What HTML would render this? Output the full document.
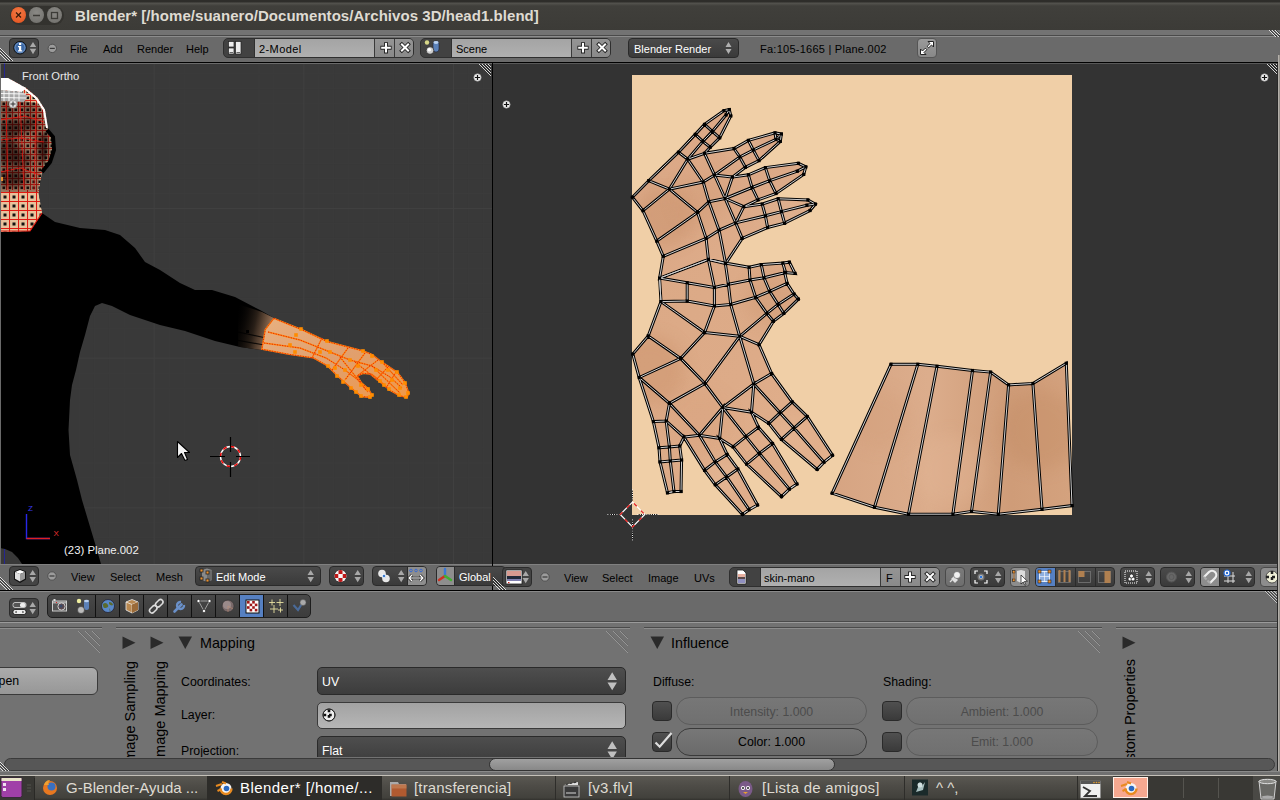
<!DOCTYPE html>
<html><head><meta charset="utf-8">
<style>
*{box-sizing:border-box;margin:0;padding:0}
html,body{width:1280px;height:800px;overflow:hidden;background:#727272;font-family:"Liberation Sans",sans-serif}
.a{position:absolute}
.t{position:absolute;white-space:nowrap;font-size:11px;line-height:12px;color:#000}
.w{color:#fff}
.btn-d{position:absolute;background:linear-gradient(#4a4a4a,#3a3a3a);border:1px solid #2a2a2a;border-radius:4px}
.btn-l{position:absolute;background:linear-gradient(#9a9a9a,#8a8a8a);border:1px solid #444;border-radius:4px}
.fld{position:absolute;background:linear-gradient(#a0a0a0,#b4b4b4);border:1px solid #2f2f2f}
</style></head><body>
<!-- title bar -->
<div class="a" style="left:0;top:0;width:1280px;height:30px;background:linear-gradient(#2e2d2a 0px,#2e2d2a 2px,#55544f 3px,#403f3b 6px,#3c3b37 30px)"></div>
<div class="a" style="left:10px;top:6px;width:54px;height:19px;border-radius:10px;background:#33322e"></div>
<div class="a" style="left:11px;top:7px;width:15px;height:16px;border-radius:50%;background:radial-gradient(circle at 50% 35%,#f47a45,#e2501c)"></div>
<div class="a" style="left:29px;top:7px;width:15px;height:16px;border-radius:50%;background:radial-gradient(circle at 50% 35%,#8a8985,#6f6e6a)"></div>
<div class="a" style="left:47px;top:7px;width:15px;height:16px;border-radius:50%;background:radial-gradient(circle at 50% 35%,#8a8985,#6f6e6a)"></div>
<svg class="a" style="left:0;top:0" width="70" height="30"><path d="M16 12.5l5 5M21 12.5l-5 5" stroke="#3a1a0a" stroke-width="1.3"/><path d="M33 15.5h7" stroke="#3c3b37" stroke-width="1.5"/><rect x="51.5" y="12.5" width="6" height="6" fill="none" stroke="#3c3b37" stroke-width="1.3"/></svg>
<div class="t" style="left:75px;top:7px;font-size:15px;line-height:18px;font-weight:bold;color:#dfdbd2;letter-spacing:0.05px">Blender* [/home/suanero/Documentos/Archivos 3D/head1.blend]</div>

<!-- strip below title -->
<div class="a" style="left:0;top:30px;width:1280px;height:6px;background:#737373;border-bottom:1px solid #4a4a4a"></div>
<!-- info header -->
<div class="a" style="left:0;top:36px;width:1280px;height:27px;background:#6a6a6a;border-top:1px solid #8c8c8c;border-bottom:1px solid #000"></div>


<!-- info header content -->
<div class="btn-d" style="left:9px;top:38px;width:30px;height:20px;background:#444;border-color:#2b2b2b"></div>
<svg class="a" style="left:0;top:36px" width="70" height="26">
<circle cx="20" cy="11.7" r="6.3" fill="#3d69a6" stroke="#111" stroke-width="1"/>
<circle cx="20" cy="11.7" r="5" fill="none" stroke="#8fb0d8" stroke-width="0.8" opacity="0.7"/>
<rect x="19" y="7" width="2.2" height="2" fill="#fff"/><path d="M18 10h3.2v4.3h1v1.2h-4.2v-1.2h1v-3.1h-1z" fill="#fff"/>
<path d="M29.8 11h6.4l-3.2-5z M29.8 12.8h6.4l-3.2 5.4z" fill="#a8a8a8"/>
<circle cx="52.3" cy="12.4" r="4.2" fill="#9c9c9c" stroke="#505050" stroke-width="1"/><path d="M49.8 12.4h5" stroke="#3a3a3a" stroke-width="1.2"/>
<path d="M0 12l13 13M0 15l10 10M0 18l7 7" stroke="#fff" stroke-width="0.8"/><path d="M0 13.2l11.8 11.8M0 16.2l8.8 8.8" stroke="#222" stroke-width="0.8"/>
</svg>
<div class="t" style="left:70px;top:43px">File</div>
<div class="t" style="left:103px;top:43px">Add</div>
<div class="t" style="left:137px;top:43px">Render</div>
<div class="t" style="left:186px;top:43px">Help</div>

<!-- screen layout -->
<div class="a" style="left:223px;top:38px;width:191px;height:20px;border:1px solid #2f2f2f;border-radius:5px;overflow:hidden;background:#424242">
 <div class="a" style="left:30px;top:0;width:121px;height:18px;background:linear-gradient(#a4a4a4,#b0b0b0);border-left:1px solid #2f2f2f"></div>
 <div class="a" style="left:150px;top:0;width:20px;height:18px;background:linear-gradient(#949494,#8a8a8a);border-left:1px solid #3a3a3a"></div>
 <div class="a" style="left:170px;top:0;width:20px;height:18px;background:linear-gradient(#949494,#8a8a8a);border-left:1px solid #3a3a3a"></div>
</div>
<svg class="a" style="left:223px;top:38px" width="191" height="20">
<rect x="5.5" y="3.5" width="5.5" height="5.5" fill="#ececec" stroke="#222" stroke-width="0.7"/><rect x="5.5" y="10" width="5.5" height="6" fill="#ececec" stroke="#222" stroke-width="0.7"/><rect x="12.5" y="3.5" width="5.5" height="12.5" fill="#ececec" stroke="#222" stroke-width="0.7"/>
<path d="M6.5 14.5h3.5M13.5 14.5h3.5" stroke="#444" stroke-width="0.8"/>
<path d="M163 4.2v11.2M157.4 9.8h11.2" stroke="#222" stroke-width="4"/><path d="M163 5v9.6M158.2 9.8h9.6" stroke="#fff" stroke-width="2.1"/>
<path d="M177.5 5l9 9M186.5 5l-9 9" stroke="#222" stroke-width="3.8"/><path d="M178.2 5.7l7.6 7.6M185.8 5.7l-7.6 7.6" stroke="#fff" stroke-width="2"/>
</svg>
<div class="t" style="left:259px;top:43px;letter-spacing:0.4px">2-Model</div>

<!-- scene -->
<div class="a" style="left:420px;top:38px;width:191px;height:20px;border:1px solid #2f2f2f;border-radius:5px;overflow:hidden;background:#424242">
 <div class="a" style="left:30px;top:0;width:121px;height:18px;background:linear-gradient(#a4a4a4,#b0b0b0);border-left:1px solid #2f2f2f"></div>
 <div class="a" style="left:150px;top:0;width:20px;height:18px;background:linear-gradient(#949494,#8a8a8a);border-left:1px solid #3a3a3a"></div>
 <div class="a" style="left:170px;top:0;width:20px;height:18px;background:linear-gradient(#949494,#8a8a8a);border-left:1px solid #3a3a3a"></div>
</div>
<svg class="a" style="left:420px;top:38px" width="191" height="20">
<circle cx="7" cy="4.5" r="2.2" fill="#e8e890" opacity="0.9"/><rect x="13" y="3" width="6" height="11" rx="3" fill="#5a80b8" stroke="#223" stroke-width="0.6"/><ellipse cx="16" cy="4.5" rx="2.6" ry="1.4" fill="#b8d0f0"/>
<circle cx="10" cy="12.5" r="3.8" fill="#cfcfcf" stroke="#222" stroke-width="0.7"/><circle cx="9.3" cy="11.8" r="1.8" fill="#fff"/>
<path d="M163 4.2v11.2M157.4 9.8h11.2" stroke="#222" stroke-width="4"/><path d="M163 5v9.6M158.2 9.8h9.6" stroke="#fff" stroke-width="2.1"/>
<path d="M177.5 5l9 9M186.5 5l-9 9" stroke="#222" stroke-width="3.8"/><path d="M178.2 5.7l7.6 7.6M185.8 5.7l-7.6 7.6" stroke="#fff" stroke-width="2"/>
</svg>
<div class="t" style="left:456px;top:43px">Scene</div>

<!-- render engine -->
<div class="btn-d" style="left:628px;top:38px;width:111px;height:20px"></div>
<div class="t w" style="left:634px;top:43px">Blender Render</div>
<svg class="a" style="left:724px;top:38px" width="12" height="20"><path d="M1.5 9h6l-3-5z M1.5 11h6l-3 5z" fill="#b0b0b0"/></svg>

<div class="t" style="left:760px;top:43px;letter-spacing:0.25px">Fa:105-1665 | Plane.002</div>

<!-- fullscreen btn -->
<div class="btn-l" style="left:917px;top:38px;width:20px;height:20px;border-color:#555;background:linear-gradient(#9a9a9a,#888)"></div>
<svg class="a" style="left:917px;top:38px" width="20" height="20"><g stroke="#222" stroke-width="1" fill="#fff"><path d="M11 3.5h5.5V9l-2-2-2.8 2.8-1.5-1.5L13 5.5z"/><path d="M9 16.5H3.5V11l2 2 2.8-2.8 1.5 1.5L7 14.5z"/></g></svg>
<svg class="a" style="left:1260px;top:30px" width="20" height="8"><path d="M9 0l7 7M12 0l7 7M15 0l5 5" stroke="#fff" stroke-width="0.8"/><path d="M10 0l7 7M13 0l7 7M16 0l4 4" stroke="#222" stroke-width="0.7"/></svg>

<!-- 3D view -->
<div class="a" style="left:0;top:63px;width:492px;height:501px;background:#393939;overflow:hidden" id="v3d"><svg class="a" style="left:0;top:0" width="492" height="501"><path d="M4.50 0V501 M19.47 0V501 M34.43 0V501 M49.40 0V501 M64.37 0V501 M79.34 0V501 M94.30 0V501 M109.27 0V501 M124.24 0V501 M139.20 0V501 M169.14 0V501 M184.10 0V501 M199.07 0V501 M214.04 0V501 M229.00 0V501 M243.97 0V501 M258.94 0V501 M273.91 0V501 M288.87 0V501 M318.81 0V501 M333.77 0V501 M348.74 0V501 M363.71 0V501 M378.68 0V501 M393.64 0V501 M408.61 0V501 M423.58 0V501 M438.54 0V501 M468.48 0V501 M483.44 0V501 M0 10.80H492 M0 25.76H492 M0 40.73H492 M0 55.70H492 M0 70.66H492 M0 85.63H492 M0 100.60H492 M0 115.57H492 M0 130.53H492 M0 160.47H492 M0 175.43H492 M0 190.40H492 M0 205.37H492 M0 220.34H492 M0 235.30H492 M0 250.27H492 M0 265.24H492 M0 280.20H492 M0 310.14H492 M0 325.10H492 M0 340.07H492 M0 355.04H492 M0 370.00H492 M0 384.97H492 M0 399.94H492 M0 414.91H492 M0 429.87H492 M0 459.81H492 M0 474.77H492 M0 489.74H492" stroke="#3b3b3b" stroke-width="1"/>
<path d="M154.17 0V501 M303.84 0V501 M453.51 0V501 M0 145.50H492 M0 295.17H492 M0 444.84H492" stroke="#404040" stroke-width="1"/>
<path d="M4.5 0V501" stroke="#262690" stroke-width="1"/>
<polygon points="0.0,167.0 30.0,168.0 42.0,150.0 55.0,159.0 80.0,165.0 105.0,167.0 120.0,172.0 135.0,185.0 145.0,199.0 160.0,207.0 180.0,220.0 195.0,227.0 212.0,227.0 235.0,234.0 260.0,247.0 274.0,255.0 262.0,287.0 240.0,284.0 215.0,278.0 185.0,268.0 160.0,262.0 130.0,252.0 112.0,243.0 102.0,240.0 95.0,243.0 90.0,253.0 85.0,272.0 80.0,289.0 76.0,307.0 72.0,322.0 70.0,337.0 68.5,367.0 70.0,392.0 77.0,417.0 82.0,437.0 88.0,457.0 94.0,477.0 101.0,501.0 22.0,501.0 18.0,495.0 12.0,489.0 5.0,486.0 0.0,485.0" fill="#000"/>
<defs><radialGradient id="wr" cx="0.85" cy="0.55" r="0.6"><stop offset="0" stop-color="#7a5a40"/><stop offset="0.5" stop-color="#3a2a20"/><stop offset="1" stop-color="#000" stop-opacity="0"/></radialGradient><linearGradient id="hand" x1="0" y1="0" x2="1" y2="1"><stop offset="0" stop-color="#e8a870"/><stop offset="1" stop-color="#f09850"/></linearGradient><pattern id="hm" width="7" height="7" patternUnits="userSpaceOnUse"><rect width="7" height="7" fill="#e8c29c"/><path d="M0 0.5H7M0.5 0V7" stroke="#e02010" stroke-width="1"/><rect x="2.5" y="2.5" width="2.5" height="2.5" fill="#111"/></pattern></defs>
<defs><linearGradient id="wr2" x1="0" y1="0" x2="1" y2="0.3"><stop offset="0" stop-color="#000" stop-opacity="0"/><stop offset="0.55" stop-color="#2a2018"/><stop offset="1" stop-color="#9a7458"/></linearGradient></defs>
<polygon points="238.0,241.0 262.0,249.0 274.0,255.0 262.0,287.0 240.0,284.0 238.0,283.0" fill="url(#wr2)"/>
<path d="M238.0,269.0 266.0,275.0M236.0,277.0 264.0,282.0" stroke="#000" stroke-width="1.2" opacity="0.8"/>
<rect x="246" y="267" width="3" height="3" fill="#000"/>
<defs><pattern id="hm2" x="0" y="1" width="6" height="6" patternUnits="userSpaceOnUse"><rect width="6" height="6" fill="#e6bf98"/><path d="M0 0.5H6M0.5 0V6" stroke="#d81810" stroke-width="0.9"/><rect x="2.5" y="2.5" width="2.6" height="2.6" fill="#111"/></pattern><pattern id="hm4" x="0" y="3" width="9" height="9" patternUnits="userSpaceOnUse"><rect width="9" height="9" fill="#e8c29c"/><path d="M0 0.5H9M0.5 0V9" stroke="#e01810" stroke-width="1.1"/><rect x="3.5" y="3.5" width="3" height="3" fill="#111"/></pattern><filter id="hb" x="-50%" y="-50%" width="200%" height="200%"><feGaussianBlur stdDeviation="3"/></filter></defs>
<polygon points="0.0,15.0 8.0,15.0 26.0,25.0 38.0,35.0 45.0,47.0 48.0,67.0 53.0,74.0 54.0,87.0 50.0,99.0 42.0,109.0 38.0,132.0 42.0,150.0 30.0,168.0 0.0,169.0" fill="url(#hm2)"/>
<polygon points="0.0,127.0 38.0,127.0 42.0,150.0 30.0,168.0 0.0,169.0" fill="url(#hm4)"/>
<g filter="url(#hb)"><ellipse cx="12" cy="65" rx="14" ry="9" fill="#000" opacity="0.6"/><ellipse cx="30" cy="61" rx="8" ry="7" fill="#000" opacity="0.5"/><ellipse cx="8" cy="89" rx="12" ry="14" fill="#000" opacity="0.6"/><ellipse cx="22" cy="97" rx="9" ry="9" fill="#000" opacity="0.5"/><ellipse cx="12" cy="115" rx="14" ry="9" fill="#000" opacity="0.6"/><ellipse cx="44" cy="85" rx="6" ry="16" fill="#000" opacity="0.7"/><ellipse cx="28" cy="47" rx="8" ry="5" fill="#000" opacity="0.3"/><ellipse cx="8" cy="47" rx="8" ry="6" fill="#000" opacity="0.4"/></g>
<polygon points="0.0,38.0 24.0,38.0 40.0,41.0 46.0,55.0 48.0,69.0 46.0,97.0 40.0,112.0 38.0,129.0 0.0,129.0" fill="#200000" opacity="0.38"/>
<path d="M0.0,77.0 20.0,75.0 44.0,79.0M0.0,57.0 25.0,53.0 44.0,59.0M0.0,109.0 20.0,105.0 40.0,112.0M6.0,41.0 8.0,127.0M20.0,37.0 24.0,127.0M36.0,41.0 34.0,127.0" stroke="#e81810" stroke-width="1" fill="none" opacity="0.8"/>
<polygon points="0.0,15.0 8.0,15.0 26.0,25.0 22.0,29.0 0.0,27.0" fill="#fff"/>
<polygon points="0.0,27.0 22.0,29.0 28.0,33.0 24.0,39.0 0.0,38.0" fill="#a8a8a8"/>
<path d="M0.0,30.5 26.0,31.0M0.0,34.5 26.0,35.0M4.0,27.0 4.0,38.0M9.0,27.0 9.0,38.0M14.0,28.0 14.0,38.0M19.0,28.0 19.0,38.0" stroke="#fff" stroke-width="0.9"/>
<path d="M24.0,25.0 36.0,35.0 44.0,47.0 47.0,65.0" stroke="#fff" stroke-width="2" fill="none"/>
<path d="M47.0,67.0 53.0,74.0 54.0,87.0 50.0,99.0 42.0,109.0" stroke="#000" stroke-width="4" fill="none"/>
<path d="M0.0,168.0 30.0,168.0 42.0,150.0" stroke="#e01810" stroke-width="1.2" fill="none"/>
<g transform="translate(13,41)"><circle r="4" fill="#ddd" stroke="#888" stroke-width="0.5"/><path d="M-2.5 0h5M0 -2.5v5" stroke="#333" stroke-width="1"/></g>
<rect x="0" y="114" width="3" height="4" fill="#e89030"/>
<defs><linearGradient id="hand2" x1="0" y1="0" x2="1" y2="1"><stop offset="0" stop-color="#e8b080"/><stop offset="0.5" stop-color="#e0a070"/><stop offset="1" stop-color="#f09848"/></linearGradient></defs>
<polygon points="273.9,255.4 301.4,266.5 327.1,278.5 363.2,288.0 371.8,291.4 382.1,299.2 397.6,309.5 405.3,319.8 408.8,330.1 407.0,334.4 399.3,332.7 389.0,326.7 380.4,318.0 371.8,311.2 363.2,310.3 357.2,312.9 361.5,319.8 368.4,325.8 371.8,331.8 370.1,334.4 361.5,333.5 351.2,325.0 337.5,312.9 327.1,302.6 313.4,294.9 289.3,291.4 261.9,286.3 265.3,266.5" fill="url(#hand2)"/>
<path d="M273.9,255.4 L301.4,266.5 L327.1,278.5 L363.2,288.0 L371.8,291.4 L382.1,299.2 L397.6,309.5 L405.3,319.8 L408.8,330.1 L407.0,334.4 L399.3,332.7 L389.0,326.7 L380.4,318.0 L371.8,311.2 L363.2,310.3 L357.2,312.9 L361.5,319.8 L368.4,325.8 L371.8,331.8 L370.1,334.4 L361.5,333.5 L351.2,325.0 L337.5,312.9 L327.1,302.6 L313.4,294.9 L289.3,291.4 L261.9,286.3 L265.3,266.5 L273.9,255.4 M268.0,269.0 L300.0,277.0 L330.0,289.0 L350.0,297.0 L372.0,303.0 L390.0,314.0 L402.0,325.0 M264.0,280.0 L300.0,285.0 L326.0,295.0 L345.0,307.0 L358.0,317.0 L366.0,327.0 M322.0,275.0 L312.0,295.0 M348.0,285.0 L332.0,307.0 M365.0,290.0 L345.0,317.0 M378.0,297.0 L357.0,313.0 M388.0,304.0 L376.0,317.0 M396.0,309.0 L386.0,325.0 M355.0,299.0 L390.0,327.0 M340.0,294.0 L368.0,329.0 M372.0,303.0 L400.0,330.0 M382.0,299.0 L403.0,322.0" fill="none" stroke="#ff8a10" stroke-width="1.4"/>
<path d="M273.9,255.4 L301.4,266.5 L327.1,278.5 L363.2,288.0 L371.8,291.4 L382.1,299.2 L397.6,309.5 L405.3,319.8 L408.8,330.1 L407.0,334.4 L399.3,332.7 L389.0,326.7 L380.4,318.0 L371.8,311.2 L363.2,310.3 L357.2,312.9 L361.5,319.8 L368.4,325.8 L371.8,331.8 L370.1,334.4 L361.5,333.5 L351.2,325.0 L337.5,312.9 L327.1,302.6 L313.4,294.9 L289.3,291.4 L261.9,286.3 L265.3,266.5 L273.9,255.4 M268.0,269.0 L300.0,277.0 L330.0,289.0 L350.0,297.0 L372.0,303.0 L390.0,314.0 L402.0,325.0 M264.0,280.0 L300.0,285.0 L326.0,295.0 L345.0,307.0 L358.0,317.0 L366.0,327.0 M322.0,275.0 L312.0,295.0 M348.0,285.0 L332.0,307.0 M365.0,290.0 L345.0,317.0 M378.0,297.0 L357.0,313.0 M388.0,304.0 L376.0,317.0 M396.0,309.0 L386.0,325.0 M355.0,299.0 L390.0,327.0 M340.0,294.0 L368.0,329.0 M372.0,303.0 L400.0,330.0 M382.0,299.0 L403.0,322.0" fill="none" stroke="#e81800" stroke-width="0.9" stroke-dasharray="1.3 1.3"/>
<g fill="#ff8c00"><rect x="299.2" y="264.2" width="3.6" height="3.6"/><rect x="294.2" y="270.2" width="3.6" height="3.6"/><rect x="288.2" y="280.2" width="3.6" height="3.6"/><rect x="293.2" y="287.2" width="3.6" height="3.6"/><rect x="325.2" y="276.2" width="3.6" height="3.6"/><rect x="318.2" y="287.2" width="3.6" height="3.6"/><rect x="328.2" y="287.2" width="3.6" height="3.6"/><rect x="333.2" y="303.2" width="3.6" height="3.6"/><rect x="348.2" y="295.2" width="3.6" height="3.6"/><rect x="343.2" y="305.2" width="3.6" height="3.6"/><rect x="356.2" y="301.2" width="3.6" height="3.6"/><rect x="361.2" y="286.2" width="3.6" height="3.6"/><rect x="370.2" y="291.2" width="3.6" height="3.6"/><rect x="380.2" y="297.2" width="3.6" height="3.6"/><rect x="374.2" y="305.2" width="3.6" height="3.6"/><rect x="386.2" y="305.2" width="3.6" height="3.6"/><rect x="395.2" y="307.2" width="3.6" height="3.6"/><rect x="390.2" y="315.2" width="3.6" height="3.6"/><rect x="403.2" y="318.2" width="3.6" height="3.6"/><rect x="398.2" y="323.2" width="3.6" height="3.6"/><rect x="406.2" y="328.2" width="3.6" height="3.6"/><rect x="404.2" y="332.2" width="3.6" height="3.6"/><rect x="397.2" y="330.2" width="3.6" height="3.6"/><rect x="387.2" y="324.2" width="3.6" height="3.6"/><rect x="378.2" y="316.2" width="3.6" height="3.6"/><rect x="382.2" y="320.2" width="3.6" height="3.6"/><rect x="359.2" y="320.2" width="3.6" height="3.6"/><rect x="366.2" y="324.2" width="3.6" height="3.6"/><rect x="370.2" y="330.2" width="3.6" height="3.6"/><rect x="368.2" y="332.2" width="3.6" height="3.6"/><rect x="359.2" y="331.2" width="3.6" height="3.6"/><rect x="349.2" y="323.2" width="3.6" height="3.6"/><rect x="354.2" y="327.2" width="3.6" height="3.6"/><rect x="335.2" y="311.2" width="3.6" height="3.6"/><rect x="341.2" y="317.2" width="3.6" height="3.6"/><rect x="326.2" y="301.2" width="3.6" height="3.6"/></g>
<circle cx="230.5" cy="393.5" r="10" fill="none" stroke="#fff" stroke-width="1.4"/>
<circle cx="230.5" cy="393.5" r="10" fill="none" stroke="#e00" stroke-width="1.4" stroke-dasharray="3.9 3.9"/>
<path d="M210 393.5H225M236 393.5H250M230.5 374V389M230.5 399V414" stroke="#000" stroke-width="1.2"/>
<path d="M177.5 378.5V394.5L181.5 390.5L185 397.5L187.5 396.5L184.5 389.5H189.5Z" fill="#f4f4f4" stroke="#000" stroke-width="1.1" stroke-linejoin="round"/>
<path d="M26.5 451V475.5H50" stroke="#2828e8" stroke-width="1.4" fill="none"/><path d="M26.5 475.5H50" stroke="#e02020" stroke-width="1.4"/>
<text x="28" y="447.5" font-family="Liberation Sans" font-size="8" fill="#3a3af0">Z</text><text x="53.5" y="473" font-family="Liberation Sans" font-size="8" fill="#e83030">X</text></svg>
<div class="t" style="left:22px;top:7px;color:#e8e8e8;font-size:11.2px">Front Ortho</div>
<div class="t" style="left:64px;top:481px;color:#f0f0f0;font-size:11.4px">(23) Plane.002</div>
<svg class="a" style="left:472px;top:9px" width="10" height="10"><circle cx="5.5" cy="5.5" r="3.7" fill="#ececec" stroke="#999" stroke-width="0.6"/><path d="M5.5 2.9v5.2M2.9 5.5h5.2" stroke="#111" stroke-width="1.2"/></svg>
<svg class="a" style="left:478px;top:0" width="14" height="14"><path d="M0 0l13 13M3 0l10 10M6 0l7 7M9 0l4 4" stroke="#fff" stroke-width="0.8"/><path d="M1 0l12 12M4 0l9 9M7 0l6 6" stroke="#222" stroke-width="0.7"/></svg>
</div>
<div class="a" style="left:0;top:63px;width:492px;height:1px;background:#6a6a6a"></div><div class="a" style="left:0;top:63px;width:1px;height:501px;background:#6a6a6a"></div><div class="a" style="left:4px;top:63px;width:1px;height:1px;background:#5050a8"></div>
<!-- separator -->
<div class="a" style="left:492px;top:62px;width:1px;height:529px;background:#000"></div>
<!-- UV editor -->
<div class="a" style="left:493px;top:63px;width:787px;height:501px;background:#333333;overflow:hidden" id="vuv">
<svg class="a" style="left:0;top:0" width="787" height="501">
<defs>
<linearGradient id="skin1" x1="0" y1="0" x2="1" y2="1"><stop offset="0" stop-color="#dcaa88"/><stop offset="0.5" stop-color="#dba886"/><stop offset="1" stop-color="#e2b390"/></linearGradient>
<linearGradient id="skin2" x1="0" y1="0" x2="1" y2="1"><stop offset="0" stop-color="#dba986"/><stop offset="0.5" stop-color="#ddab88"/><stop offset="1" stop-color="#e4b28e"/></linearGradient>
<linearGradient id="skin3" x1="0" y1="0" x2="1" y2="0"><stop offset="0" stop-color="#d6a482"/><stop offset="0.4" stop-color="#dcad8c"/><stop offset="0.75" stop-color="#cf9c78"/><stop offset="1" stop-color="#d4a27e"/></linearGradient>
</defs>
<rect x="139" y="12" width="440" height="440" fill="#f0cfa7"/>
<clipPath id="cpu"><polygon points="139.4,134.2 155.7,117.7 185.5,89.2 202.3,71.4 211.5,61.4 231.0,47.6 236.3,46.6 237.8,52.9 226.7,74.8 217.2,84.2 211.5,90.3 241.0,85.5 255.4,77.4 282.0,69.9 288.4,71.0 287.3,78.4 266.0,97.6 252.4,104.3 239.4,114.1 255.4,111.8 272.4,104.6 305.4,100.3 312.8,103.9 310.7,111.4 283.0,130.5 265.0,136.9 250.8,143.7 269.2,141.1 285.2,135.8 314.9,136.9 322.4,141.1 317.0,147.5 291.6,160.2 274.6,164.5 249.2,175.4 232.6,200.6 215.4,196.5 166.6,215.1 170.3,193.3 163.8,178.1 150.0,147.7"/><polygon points="166.6,215.1 215.4,196.4 232.3,200.1 256.1,204.3 268.3,201.6 289.8,200.1 296.4,199.2 302.0,210.4 291.7,209.5 294.1,220.4 301.0,231.0 305.4,236.1 290.8,250.4 280.4,258.3 266.0,281.7 278.6,310.5 299.2,338.9 314.2,353.5 339.5,392.3 331.0,399.2 324.1,406.4 288.5,376.4 275.8,360.4 258.5,349.2 265.4,364.2 279.5,380.5 303.9,421.0 296.4,426.1 288.5,433.6 253.6,401.1 240.1,383.9 226.6,375.4 234.1,391.4 244.8,406.0 264.5,442.0 256.1,446.7 249.5,451.4 222.3,421.8 211.6,407.3 191.0,374.1 186.7,383.0 188.6,397.0 188.0,428.5 181.0,428.5 174.5,429.8 167.0,398.9 166.0,384.8 160.4,358.6 146.2,314.5 139.8,291.1 155.2,272.9 168.0,238.6"/><polygon points="398.0,301.3 424.8,301.3 444.0,303.3 479.5,307.5 497.6,309.1 515.6,321.9 539.9,320.5 573.3,300.3 579.0,442.6 549.0,446.3 505.3,451.2 478.5,448.4 459.9,451.2 415.5,451.2 381.5,444.2 339.2,430.2"/></clipPath>
<polygon points="139.4,134.2 155.7,117.7 185.5,89.2 202.3,71.4 211.5,61.4 231.0,47.6 236.3,46.6 237.8,52.9 226.7,74.8 217.2,84.2 211.5,90.3 241.0,85.5 255.4,77.4 282.0,69.9 288.4,71.0 287.3,78.4 266.0,97.6 252.4,104.3 239.4,114.1 255.4,111.8 272.4,104.6 305.4,100.3 312.8,103.9 310.7,111.4 283.0,130.5 265.0,136.9 250.8,143.7 269.2,141.1 285.2,135.8 314.9,136.9 322.4,141.1 317.0,147.5 291.6,160.2 274.6,164.5 249.2,175.4 232.6,200.6 215.4,196.5 166.6,215.1 170.3,193.3 163.8,178.1 150.0,147.7" fill="url(#skin1)"/>
<polygon points="166.6,215.1 215.4,196.4 232.3,200.1 256.1,204.3 268.3,201.6 289.8,200.1 296.4,199.2 302.0,210.4 291.7,209.5 294.1,220.4 301.0,231.0 305.4,236.1 290.8,250.4 280.4,258.3 266.0,281.7 278.6,310.5 299.2,338.9 314.2,353.5 339.5,392.3 331.0,399.2 324.1,406.4 288.5,376.4 275.8,360.4 258.5,349.2 265.4,364.2 279.5,380.5 303.9,421.0 296.4,426.1 288.5,433.6 253.6,401.1 240.1,383.9 226.6,375.4 234.1,391.4 244.8,406.0 264.5,442.0 256.1,446.7 249.5,451.4 222.3,421.8 211.6,407.3 191.0,374.1 186.7,383.0 188.6,397.0 188.0,428.5 181.0,428.5 174.5,429.8 167.0,398.9 166.0,384.8 160.4,358.6 146.2,314.5 139.8,291.1 155.2,272.9 168.0,238.6" fill="url(#skin2)"/>
<polygon points="398.0,301.3 424.8,301.3 444.0,303.3 479.5,307.5 497.6,309.1 515.6,321.9 539.9,320.5 573.3,300.3 579.0,442.6 549.0,446.3 505.3,451.2 478.5,448.4 459.9,451.2 415.5,451.2 381.5,444.2 339.2,430.2" fill="url(#skin3)"/>
<filter id="bl" x="-50%" y="-50%" width="200%" height="200%"><feGaussianBlur stdDeviation="8"/></filter><g clip-path="url(#cpu)"><circle cx="172" cy="152" r="30" fill="#c8906a" opacity="0.45" filter="url(#bl)"/><circle cx="207" cy="137" r="25" fill="#d09a74" opacity="0.3" filter="url(#bl)"/><circle cx="157" cy="307" r="35" fill="#c88e66" opacity="0.4" filter="url(#bl)"/><circle cx="207" cy="357" r="30" fill="#d8a07a" opacity="0.3" filter="url(#bl)"/><circle cx="277" cy="237" r="25" fill="#c8926c" opacity="0.3" filter="url(#bl)"/><circle cx="227" cy="417" r="20" fill="#e8c0a0" opacity="0.35" filter="url(#bl)"/><circle cx="297" cy="377" r="20" fill="#e8bc9c" opacity="0.3" filter="url(#bl)"/><circle cx="547" cy="367" r="40" fill="#c08860" opacity="0.35" filter="url(#bl)"/><circle cx="457" cy="407" r="35" fill="#e4b898" opacity="0.35" filter="url(#bl)"/><circle cx="387" cy="357" r="30" fill="#d09c78" opacity="0.3" filter="url(#bl)"/><circle cx="247" cy="77" r="20" fill="#e8c0a0" opacity="0.3" filter="url(#bl)"/><circle cx="287" cy="147" r="20" fill="#e0b898" opacity="0.3" filter="url(#bl)"/></g>
<path d="M139.4,134.2 L155.7,117.7 L185.5,89.2 L202.3,71.4 L211.5,61.4 L231.0,47.6 L236.3,46.6 L237.8,52.9 L226.7,74.8 L217.2,84.2 L211.5,90.3 L241.0,85.5 L255.4,77.4 L282.0,69.9 L288.4,71.0 L287.3,78.4 L266.0,97.6 L252.4,104.3 L239.4,114.1 L255.4,111.8 L272.4,104.6 L305.4,100.3 L312.8,103.9 L310.7,111.4 L283.0,130.5 L265.0,136.9 L250.8,143.7 L269.2,141.1 L285.2,135.8 L314.9,136.9 L322.4,141.1 L317.0,147.5 L291.6,160.2 L274.6,164.5 L249.2,175.4 L232.6,200.6 L215.4,196.5 L166.6,215.1 L170.3,193.3 L163.8,178.1 L150.0,147.7Z M166.6,215.1 L215.4,196.4 L232.3,200.1 L256.1,204.3 L268.3,201.6 L289.8,200.1 L296.4,199.2 L302.0,210.4 L291.7,209.5 L294.1,220.4 L301.0,231.0 L305.4,236.1 L290.8,250.4 L280.4,258.3 L266.0,281.7 L278.6,310.5 L299.2,338.9 L314.2,353.5 L339.5,392.3 L331.0,399.2 L324.1,406.4 L288.5,376.4 L275.8,360.4 L258.5,349.2 L265.4,364.2 L279.5,380.5 L303.9,421.0 L296.4,426.1 L288.5,433.6 L253.6,401.1 L240.1,383.9 L226.6,375.4 L234.1,391.4 L244.8,406.0 L264.5,442.0 L256.1,446.7 L249.5,451.4 L222.3,421.8 L211.6,407.3 L191.0,374.1 L186.7,383.0 L188.6,397.0 L188.0,428.5 L181.0,428.5 L174.5,429.8 L167.0,398.9 L166.0,384.8 L160.4,358.6 L146.2,314.5 L139.8,291.1 L155.2,272.9 L168.0,238.6Z M398.0,301.3 L424.8,301.3 L444.0,303.3 L479.5,307.5 L497.6,309.1 L515.6,321.9 L539.9,320.5 L573.3,300.3 L579.0,442.6 L549.0,446.3 L505.3,451.2 L478.5,448.4 L459.9,451.2 L415.5,451.2 L381.5,444.2 L339.2,430.2Z M155.7,117.7 L176.4,126.1 L210.2,119.0 L221.5,112.0 L239.4,114.1 M150.0,147.7 L176.4,126.1 L194.7,96.2 M185.5,89.2 L194.7,96.2 L211.5,90.3 M194.7,96.2 L210.2,119.0 M211.5,90.3 L221.5,112.0 M221.5,112.0 L246.8,94.0 L260.3,87.0 L283.0,76.3 L288.4,71.0 M241.0,85.5 L246.8,94.0 L252.4,104.3 M255.4,77.4 L260.3,87.0 L266.0,97.6 M282.0,69.9 L283.0,76.3 L287.3,78.4 M202.3,71.4 L209.8,78.4 L217.2,84.2 M211.5,61.4 L219.3,68.4 L226.7,74.8 M194.7,96.2 L209.8,78.4 L219.3,68.4 L233.1,51.9 L236.3,46.6 M176.4,126.1 L204.5,149.4 L163.8,178.1 M210.2,119.0 L215.9,138.8 L204.5,149.4 M215.9,138.8 L232.1,135.5 M221.5,112.0 L232.1,135.5 M239.4,114.1 L232.1,135.5 M232.1,135.5 L259.0,124.5 L276.7,117.7 L304.3,108.2 L312.8,103.9 M255.4,111.8 L259.0,124.5 L265.0,136.9 M272.4,104.6 L276.7,117.7 L283.0,130.5 M232.1,135.5 L250.8,143.7 M232.1,135.5 L242.7,159.9 M250.8,143.7 L242.7,159.9 L249.2,175.4 M242.7,159.9 L272.4,152.8 L288.4,148.6 L313.9,142.2 L322.4,141.1 M269.2,141.1 L272.4,152.8 L274.6,164.5 M285.2,135.8 L288.4,148.6 L291.6,160.2 M215.9,138.8 L226.1,167.2 L242.7,159.9 M204.5,149.4 L213.1,175.4 L226.1,167.2 M213.1,175.4 L170.3,193.3 M213.1,175.4 L215.4,196.5 M226.1,167.2 L232.6,200.6 M166.6,215.1 L194.2,219.8 L221.4,224.5 L235.4,221.3 L257.0,217.0 L271.0,214.8 L292.6,209.5 M168.0,238.6 L194.2,238.0 L221.4,242.9 L237.7,241.4 L262.6,234.3 L276.7,228.3 L294.1,220.4 M166.6,215.1 L168.0,238.6 M194.2,219.8 L194.2,238.0 M215.4,196.4 L221.4,224.5 L221.4,242.9 M232.3,200.1 L235.4,221.3 L237.7,241.4 M256.1,204.3 L257.0,217.0 L262.6,234.3 L273.9,250.4 L280.4,258.3 M268.3,201.6 L271.0,214.8 L276.7,228.3 L285.1,241.4 L290.8,250.4 M289.8,200.1 L292.6,209.5 M273.9,250.4 L285.1,241.4 L301.0,231.0 M168.0,238.6 L211.6,269.5 M221.4,242.9 L211.6,269.5 L246.7,273.3 M237.7,241.4 L246.7,273.3 L273.9,250.4 M246.7,273.3 L266.0,281.7 M155.2,272.9 L187.6,295.4 L211.6,269.5 M187.6,295.4 L146.2,314.5 M187.6,295.4 L212.0,320.5 L246.7,273.3 L260.8,321.0 L278.6,310.5 M146.2,314.5 L176.4,340.4 L212.0,320.5 L229.8,344.5 L260.8,321.0 L258.5,349.2 M229.8,344.5 L258.5,349.2 M176.4,340.4 L206.4,372.3 L229.8,344.5 L226.6,375.4 M191.0,374.1 L206.4,372.3 L226.6,375.4 M160.4,358.6 L173.2,358.0 L176.4,340.4 M173.2,358.0 L191.0,374.1 M166.0,384.8 L176.4,383.9 L186.7,383.0 M167.0,398.9 L177.3,398.0 L188.6,397.0 M174.5,429.8 L181.0,428.5 L188.0,428.5 M173.2,358.0 L176.4,383.9 L177.3,398.0 L181.0,428.5 M260.8,321.0 L287.0,349.8 L301.0,365.1 L331.0,399.2 M299.2,338.9 L287.0,349.8 L275.8,360.4 M314.2,353.5 L301.0,365.1 L288.5,376.4 M339.5,392.3 L331.0,399.2 L324.1,406.4 M229.8,344.5 L252.9,373.6 L266.4,390.4 L296.4,426.1 M265.4,364.2 L252.9,373.6 L240.1,383.9 M279.5,380.5 L266.4,390.4 L253.6,401.1 M303.9,421.0 L296.4,426.1 L288.5,433.6 M206.4,372.3 L222.3,398.9 L233.6,413.9 L256.1,446.7 M234.1,391.4 L222.3,398.9 L211.6,407.3 M244.8,406.0 L233.6,413.9 L222.3,421.8 M264.5,442.0 L256.1,446.7 L249.5,451.4 M424.8,301.3 L381.5,444.2 M444.0,303.3 L415.5,451.2 M479.5,307.5 L459.9,451.2 M497.6,309.1 L478.5,448.4 M515.6,321.9 L505.3,451.2 M539.9,320.5 L549.0,446.3" fill="none" stroke="#000" stroke-width="3" stroke-linejoin="miter"/>
<path d="M139.4,134.2 L155.7,117.7 L185.5,89.2 L202.3,71.4 L211.5,61.4 L231.0,47.6 L236.3,46.6 L237.8,52.9 L226.7,74.8 L217.2,84.2 L211.5,90.3 L241.0,85.5 L255.4,77.4 L282.0,69.9 L288.4,71.0 L287.3,78.4 L266.0,97.6 L252.4,104.3 L239.4,114.1 L255.4,111.8 L272.4,104.6 L305.4,100.3 L312.8,103.9 L310.7,111.4 L283.0,130.5 L265.0,136.9 L250.8,143.7 L269.2,141.1 L285.2,135.8 L314.9,136.9 L322.4,141.1 L317.0,147.5 L291.6,160.2 L274.6,164.5 L249.2,175.4 L232.6,200.6 L215.4,196.5 L166.6,215.1 L170.3,193.3 L163.8,178.1 L150.0,147.7Z M166.6,215.1 L215.4,196.4 L232.3,200.1 L256.1,204.3 L268.3,201.6 L289.8,200.1 L296.4,199.2 L302.0,210.4 L291.7,209.5 L294.1,220.4 L301.0,231.0 L305.4,236.1 L290.8,250.4 L280.4,258.3 L266.0,281.7 L278.6,310.5 L299.2,338.9 L314.2,353.5 L339.5,392.3 L331.0,399.2 L324.1,406.4 L288.5,376.4 L275.8,360.4 L258.5,349.2 L265.4,364.2 L279.5,380.5 L303.9,421.0 L296.4,426.1 L288.5,433.6 L253.6,401.1 L240.1,383.9 L226.6,375.4 L234.1,391.4 L244.8,406.0 L264.5,442.0 L256.1,446.7 L249.5,451.4 L222.3,421.8 L211.6,407.3 L191.0,374.1 L186.7,383.0 L188.6,397.0 L188.0,428.5 L181.0,428.5 L174.5,429.8 L167.0,398.9 L166.0,384.8 L160.4,358.6 L146.2,314.5 L139.8,291.1 L155.2,272.9 L168.0,238.6Z M398.0,301.3 L424.8,301.3 L444.0,303.3 L479.5,307.5 L497.6,309.1 L515.6,321.9 L539.9,320.5 L573.3,300.3 L579.0,442.6 L549.0,446.3 L505.3,451.2 L478.5,448.4 L459.9,451.2 L415.5,451.2 L381.5,444.2 L339.2,430.2Z M155.7,117.7 L176.4,126.1 L210.2,119.0 L221.5,112.0 L239.4,114.1 M150.0,147.7 L176.4,126.1 L194.7,96.2 M185.5,89.2 L194.7,96.2 L211.5,90.3 M194.7,96.2 L210.2,119.0 M211.5,90.3 L221.5,112.0 M221.5,112.0 L246.8,94.0 L260.3,87.0 L283.0,76.3 L288.4,71.0 M241.0,85.5 L246.8,94.0 L252.4,104.3 M255.4,77.4 L260.3,87.0 L266.0,97.6 M282.0,69.9 L283.0,76.3 L287.3,78.4 M202.3,71.4 L209.8,78.4 L217.2,84.2 M211.5,61.4 L219.3,68.4 L226.7,74.8 M194.7,96.2 L209.8,78.4 L219.3,68.4 L233.1,51.9 L236.3,46.6 M176.4,126.1 L204.5,149.4 L163.8,178.1 M210.2,119.0 L215.9,138.8 L204.5,149.4 M215.9,138.8 L232.1,135.5 M221.5,112.0 L232.1,135.5 M239.4,114.1 L232.1,135.5 M232.1,135.5 L259.0,124.5 L276.7,117.7 L304.3,108.2 L312.8,103.9 M255.4,111.8 L259.0,124.5 L265.0,136.9 M272.4,104.6 L276.7,117.7 L283.0,130.5 M232.1,135.5 L250.8,143.7 M232.1,135.5 L242.7,159.9 M250.8,143.7 L242.7,159.9 L249.2,175.4 M242.7,159.9 L272.4,152.8 L288.4,148.6 L313.9,142.2 L322.4,141.1 M269.2,141.1 L272.4,152.8 L274.6,164.5 M285.2,135.8 L288.4,148.6 L291.6,160.2 M215.9,138.8 L226.1,167.2 L242.7,159.9 M204.5,149.4 L213.1,175.4 L226.1,167.2 M213.1,175.4 L170.3,193.3 M213.1,175.4 L215.4,196.5 M226.1,167.2 L232.6,200.6 M166.6,215.1 L194.2,219.8 L221.4,224.5 L235.4,221.3 L257.0,217.0 L271.0,214.8 L292.6,209.5 M168.0,238.6 L194.2,238.0 L221.4,242.9 L237.7,241.4 L262.6,234.3 L276.7,228.3 L294.1,220.4 M166.6,215.1 L168.0,238.6 M194.2,219.8 L194.2,238.0 M215.4,196.4 L221.4,224.5 L221.4,242.9 M232.3,200.1 L235.4,221.3 L237.7,241.4 M256.1,204.3 L257.0,217.0 L262.6,234.3 L273.9,250.4 L280.4,258.3 M268.3,201.6 L271.0,214.8 L276.7,228.3 L285.1,241.4 L290.8,250.4 M289.8,200.1 L292.6,209.5 M273.9,250.4 L285.1,241.4 L301.0,231.0 M168.0,238.6 L211.6,269.5 M221.4,242.9 L211.6,269.5 L246.7,273.3 M237.7,241.4 L246.7,273.3 L273.9,250.4 M246.7,273.3 L266.0,281.7 M155.2,272.9 L187.6,295.4 L211.6,269.5 M187.6,295.4 L146.2,314.5 M187.6,295.4 L212.0,320.5 L246.7,273.3 L260.8,321.0 L278.6,310.5 M146.2,314.5 L176.4,340.4 L212.0,320.5 L229.8,344.5 L260.8,321.0 L258.5,349.2 M229.8,344.5 L258.5,349.2 M176.4,340.4 L206.4,372.3 L229.8,344.5 L226.6,375.4 M191.0,374.1 L206.4,372.3 L226.6,375.4 M160.4,358.6 L173.2,358.0 L176.4,340.4 M173.2,358.0 L191.0,374.1 M166.0,384.8 L176.4,383.9 L186.7,383.0 M167.0,398.9 L177.3,398.0 L188.6,397.0 M174.5,429.8 L181.0,428.5 L188.0,428.5 M173.2,358.0 L176.4,383.9 L177.3,398.0 L181.0,428.5 M260.8,321.0 L287.0,349.8 L301.0,365.1 L331.0,399.2 M299.2,338.9 L287.0,349.8 L275.8,360.4 M314.2,353.5 L301.0,365.1 L288.5,376.4 M339.5,392.3 L331.0,399.2 L324.1,406.4 M229.8,344.5 L252.9,373.6 L266.4,390.4 L296.4,426.1 M265.4,364.2 L252.9,373.6 L240.1,383.9 M279.5,380.5 L266.4,390.4 L253.6,401.1 M303.9,421.0 L296.4,426.1 L288.5,433.6 M206.4,372.3 L222.3,398.9 L233.6,413.9 L256.1,446.7 M234.1,391.4 L222.3,398.9 L211.6,407.3 M244.8,406.0 L233.6,413.9 L222.3,421.8 M264.5,442.0 L256.1,446.7 L249.5,451.4 M424.8,301.3 L381.5,444.2 M444.0,303.3 L415.5,451.2 M479.5,307.5 L459.9,451.2 M497.6,309.1 L478.5,448.4 M515.6,321.9 L505.3,451.2 M539.9,320.5 L549.0,446.3" fill="none" stroke="#d0d0d0" stroke-width="1"/>
<g fill="#000"><rect x="337.6" y="428.6" width="3.2" height="3.2"/><rect x="379.9" y="442.6" width="3.2" height="3.2"/><rect x="413.9" y="449.6" width="3.2" height="3.2"/><rect x="458.3" y="449.6" width="3.2" height="3.2"/><rect x="476.9" y="446.8" width="3.2" height="3.2"/><rect x="503.7" y="449.6" width="3.2" height="3.2"/><rect x="547.4" y="444.7" width="3.2" height="3.2"/><rect x="577.4" y="441.0" width="3.2" height="3.2"/><rect x="253.8" y="75.8" width="3.2" height="3.2"/><rect x="258.7" y="85.4" width="3.2" height="3.2"/><rect x="264.4" y="96.0" width="3.2" height="3.2"/><rect x="280.4" y="68.3" width="3.2" height="3.2"/><rect x="286.8" y="69.4" width="3.2" height="3.2"/><rect x="285.7" y="76.8" width="3.2" height="3.2"/><rect x="281.4" y="74.7" width="3.2" height="3.2"/><rect x="253.8" y="110.2" width="3.2" height="3.2"/><rect x="257.4" y="122.9" width="3.2" height="3.2"/><rect x="263.4" y="135.3" width="3.2" height="3.2"/><rect x="270.8" y="103.0" width="3.2" height="3.2"/><rect x="275.1" y="116.1" width="3.2" height="3.2"/><rect x="281.4" y="128.9" width="3.2" height="3.2"/><rect x="303.8" y="98.7" width="3.2" height="3.2"/><rect x="311.2" y="102.3" width="3.2" height="3.2"/><rect x="309.1" y="109.8" width="3.2" height="3.2"/><rect x="302.7" y="106.6" width="3.2" height="3.2"/><rect x="209.9" y="59.8" width="3.2" height="3.2"/><rect x="217.7" y="66.8" width="3.2" height="3.2"/><rect x="225.1" y="73.2" width="3.2" height="3.2"/><rect x="200.7" y="69.8" width="3.2" height="3.2"/><rect x="208.2" y="76.8" width="3.2" height="3.2"/><rect x="215.6" y="82.6" width="3.2" height="3.2"/><rect x="229.4" y="46.0" width="3.2" height="3.2"/><rect x="234.7" y="45.0" width="3.2" height="3.2"/><rect x="236.2" y="51.3" width="3.2" height="3.2"/><rect x="231.5" y="50.3" width="3.2" height="3.2"/><rect x="267.6" y="139.5" width="3.2" height="3.2"/><rect x="283.6" y="134.2" width="3.2" height="3.2"/><rect x="270.8" y="151.2" width="3.2" height="3.2"/><rect x="286.8" y="147.0" width="3.2" height="3.2"/><rect x="273.0" y="162.9" width="3.2" height="3.2"/><rect x="290.0" y="158.7" width="3.2" height="3.2"/><rect x="313.3" y="135.3" width="3.2" height="3.2"/><rect x="320.8" y="139.5" width="3.2" height="3.2"/><rect x="315.4" y="145.9" width="3.2" height="3.2"/><rect x="312.3" y="140.6" width="3.2" height="3.2"/><rect x="396.4" y="299.7" width="3.2" height="3.2"/><rect x="423.2" y="299.7" width="3.2" height="3.2"/><rect x="442.4" y="301.7" width="3.2" height="3.2"/><rect x="477.9" y="305.9" width="3.2" height="3.2"/><rect x="496.0" y="307.5" width="3.2" height="3.2"/><rect x="514.0" y="320.3" width="3.2" height="3.2"/><rect x="538.3" y="318.9" width="3.2" height="3.2"/><rect x="571.7" y="298.7" width="3.2" height="3.2"/><rect x="137.8" y="132.6" width="3.2" height="3.2"/><rect x="250.8" y="102.7" width="3.2" height="3.2"/><rect x="148.4" y="146.1" width="3.2" height="3.2"/><rect x="174.8" y="124.5" width="3.2" height="3.2"/><rect x="208.6" y="117.4" width="3.2" height="3.2"/><rect x="219.9" y="110.4" width="3.2" height="3.2"/><rect x="237.8" y="112.5" width="3.2" height="3.2"/><rect x="162.2" y="176.5" width="3.2" height="3.2"/><rect x="202.9" y="147.8" width="3.2" height="3.2"/><rect x="214.3" y="137.2" width="3.2" height="3.2"/><rect x="230.5" y="133.9" width="3.2" height="3.2"/><rect x="154.1" y="116.1" width="3.2" height="3.2"/><rect x="249.2" y="142.1" width="3.2" height="3.2"/><rect x="241.1" y="158.3" width="3.2" height="3.2"/><rect x="224.5" y="165.6" width="3.2" height="3.2"/><rect x="211.5" y="173.8" width="3.2" height="3.2"/><rect x="247.6" y="173.8" width="3.2" height="3.2"/><rect x="168.7" y="191.7" width="3.2" height="3.2"/><rect x="213.8" y="194.9" width="3.2" height="3.2"/><rect x="231.0" y="199.0" width="3.2" height="3.2"/><rect x="183.9" y="87.6" width="3.2" height="3.2"/><rect x="193.1" y="94.6" width="3.2" height="3.2"/><rect x="209.9" y="88.7" width="3.2" height="3.2"/><rect x="239.4" y="83.9" width="3.2" height="3.2"/><rect x="245.2" y="92.4" width="3.2" height="3.2"/><rect x="213.8" y="194.8" width="3.2" height="3.2"/><rect x="230.7" y="198.5" width="3.2" height="3.2"/><rect x="254.5" y="202.7" width="3.2" height="3.2"/><rect x="266.7" y="200.0" width="3.2" height="3.2"/><rect x="288.2" y="198.5" width="3.2" height="3.2"/><rect x="294.8" y="197.6" width="3.2" height="3.2"/><rect x="300.4" y="208.8" width="3.2" height="3.2"/><rect x="290.1" y="207.9" width="3.2" height="3.2"/><rect x="165.0" y="213.5" width="3.2" height="3.2"/><rect x="192.6" y="218.2" width="3.2" height="3.2"/><rect x="219.8" y="222.9" width="3.2" height="3.2"/><rect x="233.8" y="219.7" width="3.2" height="3.2"/><rect x="255.4" y="215.4" width="3.2" height="3.2"/><rect x="269.4" y="213.2" width="3.2" height="3.2"/><rect x="291.0" y="207.9" width="3.2" height="3.2"/><rect x="166.4" y="237.0" width="3.2" height="3.2"/><rect x="192.6" y="236.4" width="3.2" height="3.2"/><rect x="219.8" y="241.3" width="3.2" height="3.2"/><rect x="236.1" y="239.8" width="3.2" height="3.2"/><rect x="261.0" y="232.7" width="3.2" height="3.2"/><rect x="275.1" y="226.7" width="3.2" height="3.2"/><rect x="292.5" y="218.8" width="3.2" height="3.2"/><rect x="303.8" y="234.5" width="3.2" height="3.2"/><rect x="283.5" y="239.8" width="3.2" height="3.2"/><rect x="299.4" y="229.4" width="3.2" height="3.2"/><rect x="272.3" y="248.8" width="3.2" height="3.2"/><rect x="289.2" y="248.8" width="3.2" height="3.2"/><rect x="278.8" y="256.7" width="3.2" height="3.2"/><rect x="153.6" y="271.3" width="3.2" height="3.2"/><rect x="210.0" y="267.9" width="3.2" height="3.2"/><rect x="245.1" y="271.7" width="3.2" height="3.2"/><rect x="264.4" y="280.1" width="3.2" height="3.2"/><rect x="138.2" y="289.5" width="3.2" height="3.2"/><rect x="186.0" y="293.8" width="3.2" height="3.2"/><rect x="144.6" y="312.9" width="3.2" height="3.2"/><rect x="210.4" y="318.9" width="3.2" height="3.2"/><rect x="259.2" y="319.4" width="3.2" height="3.2"/><rect x="277.0" y="308.9" width="3.2" height="3.2"/><rect x="174.8" y="338.8" width="3.2" height="3.2"/><rect x="228.2" y="342.9" width="3.2" height="3.2"/><rect x="256.9" y="347.6" width="3.2" height="3.2"/><rect x="158.8" y="357.0" width="3.2" height="3.2"/><rect x="171.6" y="356.4" width="3.2" height="3.2"/><rect x="189.4" y="372.5" width="3.2" height="3.2"/><rect x="204.8" y="370.7" width="3.2" height="3.2"/><rect x="225.0" y="373.8" width="3.2" height="3.2"/><rect x="297.6" y="337.3" width="3.2" height="3.2"/><rect x="285.4" y="348.1" width="3.2" height="3.2"/><rect x="274.1" y="358.8" width="3.2" height="3.2"/><rect x="312.6" y="351.9" width="3.2" height="3.2"/><rect x="299.4" y="363.5" width="3.2" height="3.2"/><rect x="286.9" y="374.8" width="3.2" height="3.2"/><rect x="337.9" y="390.7" width="3.2" height="3.2"/><rect x="329.4" y="397.6" width="3.2" height="3.2"/><rect x="322.5" y="404.8" width="3.2" height="3.2"/><rect x="263.8" y="362.6" width="3.2" height="3.2"/><rect x="251.3" y="372.0" width="3.2" height="3.2"/><rect x="238.5" y="382.3" width="3.2" height="3.2"/><rect x="277.9" y="378.9" width="3.2" height="3.2"/><rect x="264.8" y="388.8" width="3.2" height="3.2"/><rect x="252.0" y="399.5" width="3.2" height="3.2"/><rect x="302.3" y="419.4" width="3.2" height="3.2"/><rect x="294.8" y="424.5" width="3.2" height="3.2"/><rect x="286.9" y="432.0" width="3.2" height="3.2"/><rect x="232.5" y="389.8" width="3.2" height="3.2"/><rect x="220.7" y="397.3" width="3.2" height="3.2"/><rect x="210.0" y="405.7" width="3.2" height="3.2"/><rect x="243.2" y="404.4" width="3.2" height="3.2"/><rect x="232.0" y="412.3" width="3.2" height="3.2"/><rect x="220.7" y="420.1" width="3.2" height="3.2"/><rect x="262.9" y="440.4" width="3.2" height="3.2"/><rect x="254.5" y="445.1" width="3.2" height="3.2"/><rect x="247.9" y="449.8" width="3.2" height="3.2"/><rect x="164.4" y="383.2" width="3.2" height="3.2"/><rect x="174.8" y="382.3" width="3.2" height="3.2"/><rect x="185.1" y="381.4" width="3.2" height="3.2"/><rect x="165.4" y="397.3" width="3.2" height="3.2"/><rect x="175.7" y="396.4" width="3.2" height="3.2"/><rect x="187.0" y="395.4" width="3.2" height="3.2"/><rect x="172.9" y="428.2" width="3.2" height="3.2"/><rect x="179.4" y="426.9" width="3.2" height="3.2"/><rect x="186.4" y="426.9" width="3.2" height="3.2"/></g>
<g stroke="#fff" stroke-width="1" stroke-dasharray="1 1.2"><path d="M114.5 451.5h10M144.5 451.5h21M139.5 426.5v11M139.5 456.5v21"/></g>
<g stroke="#000" stroke-width="1" stroke-dasharray="1 1.2" stroke-dashoffset="1"><path d="M114.5 451.5h10M144.5 451.5h21M139.5 426.5v11M139.5 456.5v21"/></g>
<path d="M139.5 439l12.3 12.5-12.3 12.5-12.3-12.5z" fill="none" stroke="#fff" stroke-width="1.2"/>
<path d="M139.5 439l12.3 12.5-12.3 12.5-12.3-12.5z" fill="none" stroke="#e01010" stroke-width="1.2" stroke-dasharray="4 6" stroke-dashoffset="-2"/>
</svg>
<svg class="a" style="left:8px;top:36px" width="10" height="10"><circle cx="5.5" cy="5.5" r="3.7" fill="#ececec" stroke="#999" stroke-width="0.6"/><path d="M5.5 2.9v5.2M2.9 5.5h5.2" stroke="#111" stroke-width="1.2"/></svg><svg class="a" style="left:766px;top:9px" width="10" height="10"><circle cx="5.5" cy="5.5" r="3.7" fill="#ececec" stroke="#999" stroke-width="0.6"/><path d="M5.5 2.9v5.2M2.9 5.5h5.2" stroke="#111" stroke-width="1.2"/></svg>
<svg class="a" style="left:773px;top:0" width="14" height="14"><path d="M0 0l13 13M3 0l10 10M6 0l7 7M9 0l4 4" stroke="#fff" stroke-width="0.8"/><path d="M1 0l12 12M4 0l9 9M7 0l6 6" stroke="#222" stroke-width="0.7"/></svg>
</div>

<div class="a" style="left:493px;top:63px;width:787px;height:1px;background:#585858"></div>
<!-- view headers -->
<div class="a" style="left:0;top:564px;width:492px;height:27px;background:#6a6a6a;border-top:1px solid #808080;border-bottom:1px solid #000"></div>
<div class="a" style="left:493px;top:564px;width:787px;height:27px;background:#6a6a6a;border-top:1px solid #808080;border-bottom:1px solid #000"></div>


<!-- 3D header content -->
<div class="btn-d" style="left:9px;top:566px;width:30px;height:20px;background:#444;border-color:#2b2b2b"></div>
<svg class="a" style="left:9px;top:566px" width="30" height="20"><path d="M5 5.5l6-2.5 6 2.5v8l-6 3.5-6-3.5z" fill="#111"/><path d="M6 6l5-2 5 2-5 2z" fill="#fff"/><path d="M6 6l5 2v7.5l-5-2.8z" fill="#e0e0e0"/><path d="M16 6l-5 2v7.5l5-2.8z" fill="#9a9a9a"/></svg>
<svg class="a" style="left:28px;top:566px" width="10" height="20"><path d="M1.5 9h6.4l-3.2-5z M1.5 11h6.4l-3.2 5.2z" fill="#a8a8a8"/></svg>
<svg class="a" style="left:46px;top:570px" width="12" height="12"><circle cx="6" cy="6" r="4.2" fill="#9c9c9c" stroke="#505050" stroke-width="1"/><path d="M3.5 6h5" stroke="#3a3a3a" stroke-width="1.2"/></svg>
<svg class="a" style="left:0px;top:576px" width="14" height="14"><path d="M0 1l13 13M0 4l10 10M0 7l7 7" stroke="#fff" stroke-width="0.8"/><path d="M0 2.2l11.8 11.8M0 5.2l8.8 8.8" stroke="#222" stroke-width="0.8"/></svg>
<div class="t" style="left:71px;top:571px">View</div>
<div class="t" style="left:110px;top:571px">Select</div>
<div class="t" style="left:156px;top:571px">Mesh</div>
<div class="btn-d" style="left:195px;top:566px;width:126px;height:20px"></div>
<svg class="a" style="left:195px;top:566px" width="20" height="20"><path d="M7 4l5-1.5 5 1.5v10l-5 2-5-2z" fill="#8a8a8a"/><path d="M12 5v11l5-2V4z" fill="#6a6a6a"/><g fill="#e89030" stroke="#222" stroke-width="0.8"><rect x="5" y="3" width="3" height="3"/><rect x="11" y="5" width="3" height="3"/><rect x="5" y="11" width="3" height="3"/><rect x="11" y="13" width="3" height="3"/></g></svg>
<div class="t w" style="left:216px;top:571px">Edit Mode</div>
<svg class="a" style="left:306px;top:566px" width="10" height="20"><path d="M1.5 9h6.4l-3.2-5z M1.5 11h6.4l-3.2 5.2z" fill="#a8a8a8"/></svg>
<div class="btn-d" style="left:329px;top:566px;width:35px;height:20px"></div>
<svg class="a" style="left:329px;top:566px" width="20" height="20"><defs><clipPath id="cb"><circle cx="11.5" cy="10" r="6"/></clipPath></defs><circle cx="11.5" cy="10" r="6.3" fill="#222"/><g clip-path="url(#cb)"><rect x="5" y="4" width="13" height="13" fill="#f0f0f0"/><rect x="9.5" y="4" width="4" height="4" fill="#c01818"/><rect x="5.5" y="8" width="4" height="4" fill="#c01818"/><rect x="13.5" y="8" width="4" height="4" fill="#c01818"/><rect x="9.5" y="12" width="4" height="4" fill="#c01818"/><rect x="9.5" y="8" width="4" height="4" fill="#f8f8f8"/></g></svg>
<svg class="a" style="left:353px;top:566px" width="10" height="20"><path d="M1.5 9h6.4l-3.2-5z M1.5 11h6.4l-3.2 5.2z" fill="#a8a8a8"/></svg>
<div class="a" style="left:372px;top:566px;width:55px;height:20px;border:1px solid #2b2b2b;border-radius:4px;overflow:hidden;background:linear-gradient(#4a4a4a,#3a3a3a)"><div class="a" style="left:34px;top:0;width:20px;height:18px;background:#8e8e8e;border-left:1px solid #2b2b2b"></div></div>
<svg class="a" style="left:372px;top:566px" width="55" height="20"><circle cx="10" cy="7.5" r="3.8" fill="#e8e8e8"/><circle cx="14" cy="12.5" r="3.8" fill="#e8e8e8"/><rect x="10.5" y="8.5" width="3" height="3" fill="#3a7ad0" stroke="#fff" stroke-width="0.6"/>
<path d="M26 9h6.4l-3.2-5z M26 11h6.4l-3.2 5.2z" fill="#a8a8a8"/>
<g fill="none" stroke="#3a6ad0" stroke-width="1"><circle cx="39" cy="4.5" r="1.3"/><circle cx="44" cy="4.5" r="1.3"/><circle cx="49" cy="4.5" r="1.3"/></g>
<path d="M37 12h14M40 9l-3 3 3 3M48 9l3 3-3 3" stroke="#222" stroke-width="2.6" fill="none"/><path d="M37 12h14M40 9l-3 3 3 3M48 9l3 3-3 3" stroke="#fff" stroke-width="1.2" fill="none"/></svg>
<div class="a" style="left:436px;top:566px;width:70px;height:20px;border:1px solid #2b2b2b;border-radius:4px;overflow:hidden;background:linear-gradient(#4a4a4a,#3a3a3a)"><div class="a" style="left:0;top:0;width:18px;height:18px;background:#8e8e8e;border-right:1px solid #2b2b2b"></div></div>
<svg class="a" style="left:436px;top:566px" width="20" height="20"><path d="M9 10V3" stroke="#3a78d8" stroke-width="2.4" stroke-linecap="round"/><path d="M9 10l-6 4" stroke="#d03020" stroke-width="2.4" stroke-linecap="round"/><path d="M9 10l6 4" stroke="#40b030" stroke-width="2.4" stroke-linecap="round"/></svg>
<div class="t w" style="left:459px;top:571px">Global</div>

<!-- UV header content -->
<svg class="a" style="left:493px;top:576px" width="14" height="14"><path d="M0 1l13 13M0 4l10 10M0 7l7 7" stroke="#fff" stroke-width="0.8"/><path d="M0 2.2l11.8 11.8M0 5.2l8.8 8.8" stroke="#222" stroke-width="0.8"/></svg>
<div class="btn-d" style="left:502px;top:567px;width:30px;height:20px;background:#444;border-color:#2b2b2b"></div>
<svg class="a" style="left:502px;top:567px" width="30" height="20"><rect x="4" y="3" width="16" height="14" fill="#fff" stroke="#222" stroke-width="0.8"/><rect x="5" y="4" width="14" height="5" fill="#d89a90"/><rect x="5" y="9" width="14" height="3" fill="#222a3a"/><rect x="5" y="12" width="14" height="2" fill="#8080b0"/><rect x="6" y="15" width="1.5" height="1.2" fill="#d02020"/></svg>
<svg class="a" style="left:521px;top:567px" width="10" height="20"><path d="M1.5 9h6.4l-3.2-5z M1.5 11h6.4l-3.2 5.2z" fill="#a8a8a8"/></svg>
<svg class="a" style="left:539px;top:571px" width="12" height="12"><circle cx="6" cy="6" r="4.2" fill="#9c9c9c" stroke="#505050" stroke-width="1"/><path d="M3.5 6h5" stroke="#3a3a3a" stroke-width="1.2"/></svg>
<div class="t" style="left:564px;top:572px">View</div>
<div class="t" style="left:602px;top:572px">Select</div>
<div class="t" style="left:648px;top:572px">Image</div>
<div class="t" style="left:694px;top:572px">UVs</div>
<div class="a" style="left:729px;top:567px;width:211px;height:20px;border:1px solid #2f2f2f;border-radius:5px;overflow:hidden;background:#424242">
 <div class="a" style="left:30px;top:0;width:120px;height:18px;background:linear-gradient(#a4a4a4,#b0b0b0);border-left:1px solid #2f2f2f"></div>
 <div class="a" style="left:150px;top:0;width:20px;height:18px;background:linear-gradient(#949494,#8a8a8a);border-left:1px solid #3a3a3a"></div>
 <div class="a" style="left:170px;top:0;width:20px;height:18px;background:linear-gradient(#949494,#8a8a8a);border-left:1px solid #3a3a3a"></div>
 <div class="a" style="left:190px;top:0;width:20px;height:18px;background:linear-gradient(#949494,#8a8a8a);border-left:1px solid #3a3a3a"></div>
</div>
<svg class="a" style="left:729px;top:567px" width="30" height="20"><path d="M8 3h6l3 3v11H8z" fill="#fff" stroke="#222" stroke-width="0.8"/><rect x="9" y="7" width="7" height="3" fill="#e8b0a0"/><rect x="9" y="10" width="7" height="2" fill="#5a4a4a"/><rect x="9" y="12" width="7" height="4" fill="#9090c0"/></svg>
<div class="t" style="left:764px;top:572px">skin-mano</div>
<div class="t" style="left:886px;top:572px">F</div>
<svg class="a" style="left:899px;top:568px" width="40" height="18"><path d="M11 3.4v11.2M5.4 9h11.2" stroke="#222" stroke-width="4"/><path d="M11 4.2v9.6M6.2 9h9.6" stroke="#fff" stroke-width="2.1"/><path d="M26.5 4.5l9 9M35.5 4.5l-9 9" stroke="#222" stroke-width="3.8"/><path d="M27.2 5.2l7.6 7.6M34.8 5.2l-7.6 7.6" stroke="#fff" stroke-width="2"/></svg>
<div class="btn-l" style="left:945px;top:567px;width:20px;height:20px;background:linear-gradient(#7a7a7a,#6e6e6e);border-color:#4a4a4a"></div>
<svg class="a" style="left:945px;top:567px" width="20" height="20"><path d="M6 12l3-3 4 4-3 3z" fill="#e0e0e0"/><circle cx="12" cy="8" r="3.5" fill="#f0f0f0" stroke="#555" stroke-width="0.6"/><path d="M5 15l2-2" stroke="#ddd" stroke-width="1.2"/></svg>
<div class="btn-d" style="left:970px;top:567px;width:35px;height:20px"></div>
<svg class="a" style="left:970px;top:567px" width="35" height="20"><path d="M5 7V4h3M14 4h3v3M17 13v3h-3M8 16H5v-3" stroke="#fff" stroke-width="1.2" fill="none"/><circle cx="11" cy="10" r="3.5" fill="#777"/><rect x="9.8" y="8.8" width="2.4" height="2.4" fill="#1a6ad8" stroke="#fff" stroke-width="0.5"/><path d="M25 9h6.4l-3.2-5z M25 11h6.4l-3.2 5.2z" fill="#a8a8a8"/></svg>
<div class="btn-l" style="left:1010px;top:567px;width:20px;height:20px;background:#8d8d8d;border-color:#4a4a4a"></div>
<svg class="a" style="left:1010px;top:567px" width="20" height="20"><path d="M7 4l4-1 4 1v10l-4 2-4-2z" fill="#ddd"/><g fill="#e89030" stroke="#222" stroke-width="0.6"><rect x="2.5" y="3.5" width="2.5" height="2.5"/><rect x="2.5" y="12" width="2.5" height="2.5"/></g><path d="M4 5v8" stroke="#c07020" stroke-width="0.8"/><path d="M11 8l0 9 2.2-2 1.6 3.4 1.2-.6-1.6-3.3 3-.3z" fill="#fff" stroke="#111" stroke-width="0.7"/></svg>
<div class="a" style="left:1035px;top:567px;width:80px;height:20px;border:1px solid #2b2b2b;border-radius:4px;overflow:hidden;background:linear-gradient(#4a4a4a,#3a3a3a)">
 <div class="a" style="left:0;top:0;width:19px;height:18px;background:#5680c2"></div>
 <div class="a" style="left:19px;top:0;width:1px;height:18px;background:#2b2b2b"></div>
 <div class="a" style="left:39px;top:0;width:1px;height:18px;background:#2b2b2b"></div>
 <div class="a" style="left:59px;top:0;width:1px;height:18px;background:#2b2b2b"></div>
</div>
<svg class="a" style="left:1035px;top:567px" width="80" height="20"><rect x="4.5" y="4.5" width="10" height="10" fill="#8fb0e0" stroke="#fff" stroke-width="0.8"/><path d="M9.5 4.5v10M4.5 9.5h10" stroke="#fff" stroke-width="0.6"/><g fill="#e89030" stroke="#222" stroke-width="0.6"><rect x="3" y="3" width="3" height="3"/><rect x="13" y="3" width="3" height="3"/><rect x="3" y="13" width="3" height="3"/><rect x="13" y="13" width="3" height="3"/></g>
<rect x="23.5" y="4.5" width="12" height="11" fill="none" stroke="#777" stroke-width="0.8"/><g fill="#b08050"><rect x="23.5" y="3" width="2" height="12"/><rect x="28.5" y="3" width="2" height="12"/><rect x="33.5" y="3" width="2" height="12"/></g>
<rect x="43.5" y="4.5" width="12" height="11" fill="none" stroke="#777" stroke-width="0.8"/><rect x="43.5" y="4" width="6" height="6" fill="#b08050"/>
<rect x="63.5" y="4.5" width="12" height="11" fill="none" stroke="#777" stroke-width="0.8"/><rect x="69.5" y="4" width="6" height="12" fill="#b08050"/></svg>
<div class="btn-d" style="left:1120px;top:567px;width:35px;height:20px"></div>
<svg class="a" style="left:1120px;top:567px" width="35" height="20"><rect x="5" y="4" width="12" height="12" fill="none" stroke="#fff" stroke-width="1" stroke-dasharray="1 1"/><circle cx="10" cy="12" r="2" fill="#fff" stroke="#000" stroke-width="0.6"/><circle cx="13" cy="12" r="2" fill="#fff" stroke="#000" stroke-width="0.6"/><circle cx="11.5" cy="9" r="2" fill="#fff" stroke="#000" stroke-width="0.6"/><path d="M25.5 9h6.4l-3.2-5z M25.5 11h6.4l-3.2 5.2z" fill="#a8a8a8"/></svg>
<div class="btn-d" style="left:1160px;top:567px;width:35px;height:20px"></div>
<svg class="a" style="left:1160px;top:567px" width="35" height="20"><circle cx="11.5" cy="10" r="5" fill="#666" stroke="#555"/><circle cx="11.5" cy="10" r="2.5" fill="none" stroke="#5a5a5a"/><path d="M25.5 9h6.4l-3.2-5z M25.5 11h6.4l-3.2 5.2z" fill="#a8a8a8"/></svg>
<div class="a" style="left:1200px;top:567px;width:55px;height:20px;border:1px solid #2b2b2b;border-radius:4px;overflow:hidden;background:linear-gradient(#4a4a4a,#3a3a3a)"><div class="a" style="left:0;top:0;width:19px;height:18px;background:#8d8d8d;border-right:1px solid #2b2b2b"></div></div>
<svg class="a" style="left:1200px;top:567px" width="55" height="20"><path d="M4 10l5-5a4 4 0 0 1 6 6l-5 5" stroke="#eee" stroke-width="2.2" fill="none"/><path d="M4 10l2.5 2.5M10 16l-2.5-2.5" stroke="#aaa" stroke-width="2.2"/>
<path d="M28 5v11M33 5v11M24 9h11M24 14h11" stroke="#ddd" stroke-width="1"/><circle cx="27" cy="6" r="3" fill="#fff" stroke="#2a6ad0" stroke-width="1.2"/><circle cx="27" cy="6" r="1.2" fill="#2a6ad0"/>
<path d="M45.5 9h6.4l-3.2-5z M45.5 11h6.4l-3.2 5.2z" fill="#a8a8a8"/></svg>
<div class="btn-l" style="left:1260px;top:567px;width:30px;height:20px;background:#8d8d8d;border-color:#4a4a4a"></div>
<svg class="a" style="left:1260px;top:567px" width="20" height="20"><circle cx="12" cy="10" r="6" fill="#f0f0d8" stroke="#333" stroke-width="0.8"/><path d="M12 4v12M6 10h12" stroke="#222" stroke-width="2.5" stroke-dasharray="3 3"/></svg>

<!-- properties header -->
<div class="a" style="left:0;top:591px;width:1280px;height:31px;background:#6a6a6a;border-top:1px solid #8a8a8a;border-bottom:1px solid #4a4a4a"></div><div class="a" style="left:0;top:622px;width:1280px;height:1px;background:#9a9a9a"></div>


<!-- properties header content -->
<svg class="a" style="left:1265px;top:591px" width="13" height="13"><path d="M0 0l13 13M3 0l10 10M6 0l7 7M9 0l4 4" stroke="#ddd" stroke-width="0.8"/><path d="M1 0l12 12M4 0l9 9M7 0l6 6" stroke="#333" stroke-width="0.7"/></svg>
<div class="btn-d" style="left:9px;top:598px;width:30px;height:20px;background:#444;border-color:#2b2b2b"></div>
<svg class="a" style="left:9px;top:598px" width="30" height="20"><rect x="4" y="4.5" width="13" height="5" rx="2" fill="#555" stroke="#ddd" stroke-width="0.8"/><rect x="11" y="5" width="5.5" height="4" rx="1.5" fill="#eee"/><rect x="4" y="11.5" width="13" height="5" rx="2" fill="#eee" stroke="#111" stroke-width="0.8"/><path d="M6 14l1.5-1.2v2.4zM15 14l-1.5-1.2v2.4z" fill="#111"/></svg>
<svg class="a" style="left:28px;top:598px" width="10" height="20"><path d="M1.5 9h6.4l-3.2-5z M1.5 11h6.4l-3.2 5.2z" fill="#a8a8a8"/></svg>
<div class="a" style="left:47px;top:594px;width:264px;height:24px;border:1px solid #1e1e1e;border-radius:5px;overflow:hidden;background:linear-gradient(#484848,#3c3c3c)">
<div class="a" style="left:191px;top:0;width:24px;height:22px;background:#5680c2"></div>
<div class="a" style="left:47px;top:0;width:1px;height:22px;background:#111"></div><div class="a" style="left:71px;top:0;width:1px;height:22px;background:#111"></div><div class="a" style="left:95px;top:0;width:1px;height:22px;background:#111"></div><div class="a" style="left:119px;top:0;width:1px;height:22px;background:#111"></div><div class="a" style="left:143px;top:0;width:1px;height:22px;background:#111"></div><div class="a" style="left:167px;top:0;width:1px;height:22px;background:#111"></div><div class="a" style="left:191px;top:0;width:1px;height:22px;background:#111"></div><div class="a" style="left:215px;top:0;width:1px;height:22px;background:#111"></div><div class="a" style="left:239px;top:0;width:1px;height:22px;background:#111"></div><div class="a" style="left:263px;top:0;width:1px;height:22px;background:#111"></div>
</div>
<svg class="a" style="left:47px;top:594px" width="264" height="24">
<!-- camera -->
<g transform="translate(5,4)"><rect x="0.5" y="3" width="14" height="10" fill="#555" stroke="#ccc" stroke-width="1"/><rect x="1" y="3.5" width="13" height="2" fill="#aaa"/><rect x="1.5" y="1" width="2" height="2" fill="#ddd"/><circle cx="9.5" cy="8.5" r="3.6" fill="#5a4a50" stroke="#ccc" stroke-width="1"/><circle cx="9" cy="8" r="1.5" fill="#3a4a6a"/><rect x="4" y="4" width="1" height="1" fill="#e02020"/></g>
<!-- scene -->
<g transform="translate(29,4)"><circle cx="3" cy="3" r="2.2" fill="#f0f0a0"/><rect x="8" y="2" width="5" height="10" rx="2.5" fill="#5a80b8"/><ellipse cx="10.5" cy="3" rx="2.5" ry="1.2" fill="#b8d0f0"/><circle cx="5" cy="12" r="3.5" fill="#bbb" stroke="#333" stroke-width="0.6"/></g>
<!-- world -->
<g transform="translate(53,4)"><circle cx="8" cy="8" r="6.5" fill="#5a88c8" stroke="#223" stroke-width="0.8"/><path d="M3 6c2-2 4-1 5 1s-1 3-3 3-2-2-2-4zM9 4c2 0 4 1 4 3-1 1-3 0-4-1zM9 10c1 1 2 3 1 4" fill="#5a6a30"/></g>
<!-- object -->
<g transform="translate(77,4)"><path d="M8 1.5l6 2.5v8l-6 3-6-3V4z" fill="#b88850" stroke="#eee" stroke-width="0.8"/><path d="M2 4l6 2.5 6-2.5" fill="none" stroke="#eee" stroke-width="0.8"/><path d="M8 6.5v8.5" stroke="#eee" stroke-width="0.6"/><path d="M8 6.5l6-2.5v8l-6 3z" fill="#9a6a38"/></g>
<!-- constraint -->
<g transform="translate(101,4)" fill="none" stroke="#ddd" stroke-width="1.6"><path d="M2 11l3-3a2.5 2.5 0 0 1 3.5 3.5l-3 3a2.5 2.5 0 0 1-3.5-3.5z"/><path d="M8 5l3-3a2.5 2.5 0 0 1 3.5 3.5l-3 3a2.5 2.5 0 0 1-3.5-3.5z"/></g>
<!-- modifier wrench -->
<g transform="translate(125,4)"><path d="M2.5 13.5l7-7" stroke="#6a90c8" stroke-width="2.6" stroke-linecap="round"/><path d="M9 4a3.5 3.5 0 1 0 3 3" stroke="#6a90c8" stroke-width="2.4" fill="none"/></g>
<!-- data -->
<g transform="translate(149,4)"><path d="M2.5 3h11L8 13z" fill="none" stroke="#aaa" stroke-width="0.9"/><g fill="#fff" stroke="#222" stroke-width="0.6"><circle cx="2.5" cy="3" r="1.6"/><circle cx="13.5" cy="3" r="1.6"/><circle cx="8" cy="13" r="1.6"/></g></g>
<!-- material -->
<g transform="translate(173,4)"><circle cx="8" cy="8" r="6" fill="#7a6a6a" stroke="#333" stroke-width="0.6"/><circle cx="7" cy="7" r="4" fill="#a89898" opacity="0.7"/><path d="M8 8l5 3M8 8V14" stroke="#c89070" stroke-width="0.8" opacity="0.6"/></g>
<!-- texture -->
<g transform="translate(197,4)"><rect x="2" y="2" width="13" height="13" fill="#fff" stroke="#111" stroke-width="1"/><g fill="#a01818"><rect x="3" y="3" width="2.6" height="2.6"/><rect x="8.2" y="3" width="2.6" height="2.6"/><rect x="5.6" y="5.6" width="2.6" height="2.6"/><rect x="10.8" y="5.6" width="2.6" height="2.6"/><rect x="3" y="8.2" width="2.6" height="2.6"/><rect x="8.2" y="8.2" width="2.6" height="2.6"/><rect x="5.6" y="10.8" width="2.6" height="2.6"/><rect x="10.8" y="10.8" width="2.6" height="2.6"/></g></g>
<!-- particles -->
<g transform="translate(221,4)" stroke="#e8e0a0" stroke-width="0.9"><path d="M4 1.5v6M1 4.5h6M12 1v7M8.5 4.5h7M6 7v8M2 11h8M12.5 9.5v5M10 12h5"/></g>
<!-- physics -->
<g transform="translate(245,4)"><path d="M1.5 7l4.5 5 5-8" stroke="#4a6a98" stroke-width="2.2" fill="none"/><circle cx="11" cy="4.5" r="3" fill="#aaa" stroke="#555" stroke-width="0.5"/></g>
</svg>

<!-- properties region -->
<div class="a" style="left:0;top:623px;width:1280px;height:153px;background:#727272;border-bottom:1px solid #b4b4b4"></div>


<!-- panels -->
<div class="a" style="left:0;top:627px;width:102px;height:2px;border-top:1px solid #4a4a4a;border-bottom:1px solid #8c8c8c"></div>
<div class="a" style="left:116px;top:627px;width:514px;height:2px;border-top:1px solid #4a4a4a;border-bottom:1px solid #8c8c8c"></div>
<div class="a" style="left:644px;top:627px;width:458px;height:2px;border-top:1px solid #4a4a4a;border-bottom:1px solid #8c8c8c"></div>
<div class="a" style="left:1116px;top:627px;width:162px;height:2px;border-top:1px solid #4a4a4a;border-bottom:1px solid #8c8c8c"></div>
<svg class="a" style="left:77px;top:630px" width="24" height="24"><path d="M1 1l22 22M8 1l15 15M15 1l8 8" stroke="#9a9a9a" stroke-width="0.9"/><path d="M2 1l21 21M9 1l14 14M16 1l7 7" stroke="#555" stroke-width="0.6" opacity="0.6"/></svg><svg class="a" style="left:605px;top:630px" width="24" height="24"><path d="M1 1l22 22M8 1l15 15M15 1l8 8" stroke="#9a9a9a" stroke-width="0.9"/><path d="M2 1l21 21M9 1l14 14M16 1l7 7" stroke="#555" stroke-width="0.6" opacity="0.6"/></svg><svg class="a" style="left:1077px;top:630px" width="24" height="24"><path d="M1 1l22 22M8 1l15 15M15 1l8 8" stroke="#9a9a9a" stroke-width="0.9"/><path d="M2 1l21 21M9 1l14 14M16 1l7 7" stroke="#555" stroke-width="0.6" opacity="0.6"/></svg>
<div class="a" style="left:-10px;top:667px;width:108px;height:28px;border:1px solid #3a3a3a;border-radius:6px;background:linear-gradient(#ababab,#979797)"></div>
<div class="t" style="left:-11px;top:674px;font-size:12.3px;line-height:14px">Open</div>
<svg class="a" style="left:122px;top:636px" width="15" height="14"><path d="M0.5 0.5L13.5 6.75 0.5 13z" fill="#2a2a2a"/></svg><svg class="a" style="left:150px;top:636px" width="15" height="14"><path d="M0.5 0.5L13.5 6.75 0.5 13z" fill="#2a2a2a"/></svg><svg class="a" style="left:178px;top:636px" width="15" height="14"><path d="M0.5 0.5h13.5L7.25 13z" fill="#2a2a2a"/></svg>
<div class="t" style="left:200px;top:635px;font-size:14.3px;line-height:16px">Mapping</div>
<div class="t" style="left:122px;top:861px;width:200px;text-align:right;font-size:14.5px;line-height:16px;transform-origin:0 0;transform:rotate(-90deg)">Image Sampling</div>
<div class="t" style="left:152px;top:861px;width:200px;text-align:right;font-size:14.5px;line-height:16px;transform-origin:0 0;transform:rotate(-90deg)">Image Mapping</div>
<div class="t" style="left:181px;top:675px;font-size:12.3px;line-height:14px">Coordinates:</div>
<div class="t" style="left:181px;top:708px;font-size:12.3px;line-height:14px">Layer:</div>
<div class="t" style="left:181px;top:744px;font-size:12.3px;line-height:14px">Projection:</div>
<div class="a" style="left:317px;top:667px;width:309px;height:28px;border:1px solid #2a2a2a;border-radius:5px;background:linear-gradient(#4e4e4e,#3c3c3c)"></div>
<div class="t w" style="left:322px;top:675px;font-size:12.3px;line-height:14px">UV</div>
<svg class="a" style="left:607px;top:667px" width="10" height="28"><path d="M0.5 13h9.4l-4.7-7.8z M0.5 15.5h9.4l-4.7 7.8z" fill="#c0c0c0"/></svg>
<div class="a" style="left:317px;top:702px;width:309px;height:27px;border:1px solid #3a3a3a;border-radius:5px;background:linear-gradient(#a2a2a2,#b6b6b6)"></div>
<svg class="a" style="left:321px;top:707px" width="16" height="16"><circle cx="8" cy="8" r="6" fill="#f0f0f0" stroke="#222" stroke-width="0.9"/><path d="M8 2.5v11M2.5 8h11" stroke="#111" stroke-width="2.6" stroke-dasharray="2.75 2.75"/><circle cx="8" cy="8" r="6" fill="none" stroke="#222" stroke-width="0.9"/></svg>
<div class="a" style="left:317px;top:736px;width:309px;height:28px;border:1px solid #2a2a2a;border-radius:5px;background:linear-gradient(#4e4e4e,#3c3c3c)"></div>
<div class="t w" style="left:322px;top:744px;font-size:12.3px;line-height:14px">Flat</div>
<svg class="a" style="left:607px;top:736px" width="10" height="28"><path d="M0.5 13h9.4l-4.7-7.8z M0.5 15.5h9.4l-4.7 7.8z" fill="#c0c0c0"/></svg>

<svg class="a" style="left:650px;top:636px" width="15" height="14"><path d="M0.5 0.5h13.5L7.25 13z" fill="#2a2a2a"/></svg>
<div class="t" style="left:671px;top:635px;font-size:14.3px;line-height:16px">Influence</div>
<div class="t" style="left:653px;top:675px;font-size:12.3px;line-height:14px">Diffuse:</div>
<div class="t" style="left:883px;top:675px;font-size:12.3px;line-height:14px">Shading:</div>
<div class="a" style="left:652px;top:701px;width:20px;height:20px;border:1px solid #2a2a2a;border-radius:4px;background:linear-gradient(#505050,#3a3a3a)"></div>
<div class="a" style="left:652px;top:732px;width:20px;height:20px;border:1px solid #2a2a2a;border-radius:4px;background:linear-gradient(#505050,#3a3a3a)"></div>
<svg class="a" style="left:652px;top:728px" width="22" height="24"><path d="M3.5 14.5l4.2 4.2L19.5 5" stroke="#dedede" stroke-width="2.2" fill="none"/></svg>
<div class="a" style="left:882px;top:701px;width:20px;height:20px;border:1px solid #2a2a2a;border-radius:4px;background:linear-gradient(#505050,#3a3a3a)"></div>
<div class="a" style="left:882px;top:732px;width:20px;height:20px;border:1px solid #2a2a2a;border-radius:4px;background:linear-gradient(#505050,#3a3a3a)"></div>
<div class="a" style="left:676px;top:697px;width:191px;height:28px;border:1px solid #5c5c5c;border-radius:14px;background:linear-gradient(#777,#707070)"></div>
<div class="a" style="left:676px;top:728px;width:191px;height:28px;border:1px solid #3a3a3a;border-radius:14px;background:linear-gradient(#777,#6a6a6a)"></div>
<div class="a" style="left:906px;top:697px;width:192px;height:28px;border:1px solid #5c5c5c;border-radius:14px;background:linear-gradient(#777,#707070)"></div>
<div class="a" style="left:906px;top:728px;width:192px;height:28px;border:1px solid #5c5c5c;border-radius:14px;background:linear-gradient(#777,#707070)"></div>
<div class="t" style="left:676px;top:705px;width:191px;text-align:center;color:#4c4c4c;font-size:12.3px;line-height:14px">Intensity: 1.000</div>
<div class="t" style="left:676px;top:735px;width:191px;text-align:center;font-size:12.3px;line-height:14px">Color: 1.000</div>
<div class="t" style="left:906px;top:705px;width:192px;text-align:center;color:#4c4c4c;font-size:12.3px;line-height:14px">Ambient: 1.000</div>
<div class="t" style="left:906px;top:735px;width:192px;text-align:center;color:#4c4c4c;font-size:12.3px;line-height:14px">Emit: 1.000</div>
<svg class="a" style="left:1122px;top:636px" width="15" height="14"><path d="M0.5 0.5L13.5 6.75 0.5 13z" fill="#2a2a2a"/></svg>
<div class="t" style="left:1122px;top:859px;width:200px;text-align:right;font-size:14.5px;line-height:16px;transform-origin:0 0;transform:rotate(-90deg)">Custom Properties</div>

<!-- scrollbar -->
<div class="a" style="left:0;top:757px;width:1280px;height:18px;background:#727272;border-bottom:1px solid #555"></div>
<div class="a" style="left:4px;top:758px;width:1271px;height:13px;border:1px solid #3a3a3a;border-radius:7px;background:#575757"></div>
<div class="a" style="left:489px;top:758px;width:346px;height:13px;border:1px solid #333;border-radius:7px;background:linear-gradient(#a0a0a0,#888)"></div>
<svg class="a" style="left:0;top:761px" width="14" height="14"><path d="M0 1l13 13M0 4l10 10M0 7l7 7" stroke="#fff" stroke-width="0.8"/><path d="M0 2.2l11.8 11.8M0 5.2l8.8 8.8" stroke="#222" stroke-width="0.8"/></svg>

<div class="a" style="left:1277px;top:63px;width:1px;height:713px;background:#282828"></div><div class="a" style="left:1278px;top:55px;width:1px;height:721px;background:#b4b0aa"></div><div class="a" style="left:1279px;top:55px;width:1px;height:721px;background:#95918b"></div>
<!-- taskbar -->

<div class="a" style="left:0;top:771px;width:1280px;height:5px;background:#707070;border-top:1px solid #8a8a8a;border-bottom:1px solid #c4c0b8"></div>
<div class="a" style="left:0;top:776px;width:1280px;height:24px;background:#393834"></div><div class="a" style="left:35px;top:776px;width:172px;height:24px;background:linear-gradient(#5a5852,#4e4c47 40%,#42413c 90%,#33322e)"></div><div class="a" style="left:382px;top:776px;width:173px;height:24px;background:linear-gradient(#5a5852,#4e4c47 40%,#42413c 90%,#33322e)"></div><div class="a" style="left:556px;top:776px;width:173px;height:24px;background:linear-gradient(#5a5852,#4e4c47 40%,#42413c 90%,#33322e)"></div><div class="a" style="left:730px;top:776px;width:174px;height:24px;background:linear-gradient(#5a5852,#4e4c47 40%,#42413c 90%,#33322e)"></div><div class="a" style="left:905px;top:776px;width:172px;height:24px;background:linear-gradient(#5a5852,#4e4c47 40%,#42413c 90%,#33322e)"></div><div class="a" style="left:1078px;top:776px;width:35px;height:24px;background:linear-gradient(#5a5852,#4e4c47 40%,#42413c 90%,#33322e)"></div>
<div class="a" style="left:207px;top:776px;width:175px;height:24px;background:#2d2c29"></div>
<div class="a" style="left:1113px;top:777px;width:35px;height:21px;background:#f6a890;border:1px solid #fff0e8"></div>
<div class="a" style="left:1253px;top:776px;width:27px;height:24px;background:#4a4945"></div>
<div class="a" style="left:34px;top:778px;width:1px;height:22px;background:#2a2926"></div>
<div class="a" style="left:555px;top:776px;width:1px;height:24px;background:#2e2d2a"></div>
<div class="a" style="left:729px;top:776px;width:1px;height:24px;background:#2e2d2a"></div>
<div class="a" style="left:904px;top:776px;width:1px;height:24px;background:#2e2d2a"></div><div class="a" style="left:1077px;top:776px;width:1px;height:24px;background:#2e2d2a"></div>
<div class="a" style="left:1183px;top:778px;width:1px;height:20px;background:#55544f"></div>
<div class="a" style="left:1218px;top:778px;width:1px;height:20px;background:#55544f"></div>
<svg class="a" style="left:0;top:776px" width="1280" height="24">
<rect x="1" y="1.5" width="21" height="20" rx="2" fill="#a040a8" stroke="#3a2a3a" stroke-width="1"/><rect x="1.5" y="2" width="20" height="3" fill="#e8e4c8"/><rect x="3" y="7" width="3" height="3" fill="#f0e0f0"/><rect x="3" y="12" width="3" height="3" fill="#f0e0f0"/>
<path d="M27 9h4M27 12h4M27 15h4" stroke="#55544f" stroke-width="1"/>
<circle cx="50" cy="12" r="7" fill="#e87820"/><circle cx="51.5" cy="10.5" r="4" fill="#3a70c0"/><path d="M44 9c1-4 4-5 6-5-2 2-2 4-1 5z" fill="#f0a030"/>
<g transform="translate(216,4)"><circle cx="10" cy="8.5" r="5.5" fill="#f5f5f5"/><circle cx="10.5" cy="8.5" r="2.8" fill="#2a68c0"/><path d="M4.5 8.5a5.5 5.5 0 0 0 11 0" fill="none" stroke="#e88a20" stroke-width="2.4"/><path d="M0 6l6-2M1.5 11l4-2M6 2l4 1.5" stroke="#e88a20" stroke-width="2"/></g>
<g transform="translate(390,5)"><path d="M0 1h8l1 2h7v12H0z" fill="#aaa"/><rect x="1.5" y="3.5" width="15" height="12" fill="#b05a30"/><rect x="1.5" y="3.5" width="15" height="4" fill="#c88a60" opacity="0.6"/></g>
<g transform="translate(564,5)"><rect x="0" y="5" width="15" height="11" fill="#3a3a3a" stroke="#ccc" stroke-width="0.8"/><path d="M0 4l14-3v3" fill="#ddd"/><path d="M2 3.5l2-0.5M6 2.5l2-0.5M10 1.6l2-0.5" stroke="#333" stroke-width="1.2"/><rect x="2" y="11" width="10" height="2" fill="#888"/></g>
<g transform="translate(738,4)"><ellipse cx="7.5" cy="9" rx="7" ry="8" fill="#7a5a88"/><circle cx="5" cy="8" r="2" fill="#fff"/><circle cx="10" cy="8" r="2" fill="#fff"/><circle cx="5" cy="8" r="1" fill="#222"/><circle cx="10" cy="8" r="1" fill="#222"/><path d="M5 12h5l-2.5 2z" fill="#e8a030"/></g>
<g transform="translate(912,3)"><rect x="0" y="0.5" width="16" height="16" fill="#1a2a2a"/><path d="M4 13l4-10 2 4 3-4-2 8z" fill="#a8c0c0"/><circle cx="8" cy="6" r="2.5" fill="#d0e0e0"/></g>
<g transform="translate(1080,3)"><rect x="0.5" y="2" width="20" height="17" fill="#f0f0f0" stroke="#888" stroke-width="0.6"/><rect x="0.5" y="2" width="20" height="3" fill="#555"/><circle cx="14" cy="3.5" r="0.8" fill="#e8a030"/><circle cx="16.5" cy="3.5" r="0.8" fill="#e8a030"/><circle cx="19" cy="3.5" r="0.8" fill="#e8a030"/><path d="M3 8l7 4-5 5h12" stroke="#333" stroke-width="1.8" fill="none"/></g>
<g transform="translate(1121,4)"><circle cx="10" cy="8.5" r="5.5" fill="#f5f5f5"/><circle cx="10.5" cy="8.5" r="2.8" fill="#2a68c0"/><path d="M4.5 8.5a5.5 5.5 0 0 0 11 0" fill="none" stroke="#e88a20" stroke-width="2.4"/><path d="M0 6l6-2M1.5 11l4-2M6 2l4 1.5" stroke="#e88a20" stroke-width="2"/></g>
<g transform="translate(1258,2)"><path d="M1 3h17l-2 18H3z" fill="#6a6a66" stroke="#cfcfcf" stroke-width="1"/><ellipse cx="9.5" cy="3.5" rx="8.5" ry="2.2" fill="#8a8a86" stroke="#e0e0e0" stroke-width="1"/><ellipse cx="9.5" cy="19" rx="6" ry="1.5" fill="#aaa"/></g>
</svg>
<div class="t" style="left:66px;top:779px;font-size:15px;line-height:17px;color:#dfdbd2">G-Blender-Ayuda ...</div>
<div class="t" style="left:240px;top:779px;font-size:15px;line-height:17px;color:#dfdbd2;color:#fff;letter-spacing:0.45px">Blender* [/home/...</div>
<div class="t" style="left:414px;top:779px;font-size:15px;line-height:17px;color:#dfdbd2;letter-spacing:0.15px">[transferencia]</div>
<div class="t" style="left:588px;top:779px;font-size:15px;line-height:17px;color:#dfdbd2;letter-spacing:0.2px">[v3.flv]</div>
<div class="t" style="left:762px;top:779px;font-size:15px;line-height:17px;color:#dfdbd2;letter-spacing:0.25px">[Lista de amigos]</div>
<div class="t" style="left:936px;top:779px;font-size:15px;line-height:17px;color:#dfdbd2">^ ^,</div>


</body></html>
